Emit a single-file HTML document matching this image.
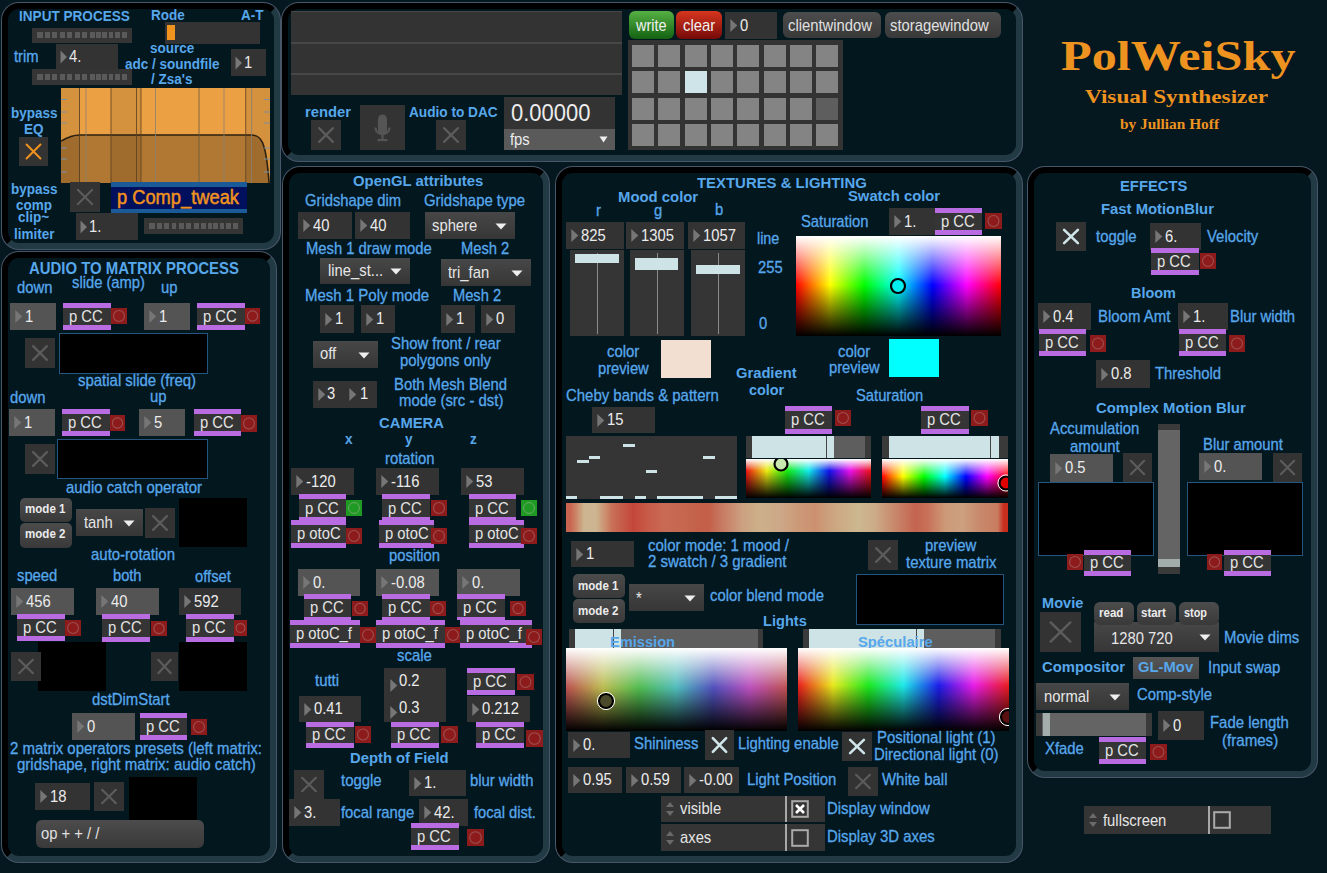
<!DOCTYPE html><html><head><meta charset="utf-8"><style>
*{margin:0;padding:0}
html,body{width:1327px;height:873px;overflow:hidden;background:#05171f}
body>div,body>svg{position:absolute}
.t{white-space:nowrap}
.r{-webkit-text-stroke:0.3px currentColor}
.pn{box-sizing:border-box;border:6px solid;border-color:#000 #223a43 #223a43 #000;border-radius:17px;background:#03171f;box-shadow:0 0 0 1px #48566a}
</style></head><body><div class="pn" style="left:2px;top:3px;width:278px;height:246px"></div>
<div class="pn" style="left:2px;top:252px;width:274px;height:610px"></div>
<div class="pn" style="left:282px;top:3px;width:740px;height:158px"></div>
<div class="pn" style="left:283px;top:167px;width:266px;height:695px"></div>
<div class="pn" style="left:556px;top:167px;width:466px;height:695px"></div>
<div class="pn" style="left:1028px;top:167px;width:289px;height:610px"></div>
<div class="t" style="left:1060.50px;top:55.68px;font:bold 43.0px 'Liberation Serif',serif;line-height:0;color:#ee9320;transform:scaleX(1.1684);transform-origin:0 0;">PolWeiSky</div>
<div class="t" style="left:1084.80px;top:97.43px;font:bold 19.5px 'Liberation Serif',serif;line-height:0;color:#ee9320;transform:scaleX(1.1910);transform-origin:0 0;">Visual Synthesizer</div>
<div class="t" style="left:1119.50px;top:123.80px;font:bold 15.0px 'Liberation Serif',serif;line-height:0;color:#ee9320;transform:scaleX(1.0239);transform-origin:0 0;">by Jullian Hoff</div>
<div class="t" style="left:19.30px;top:15.53px;font:bold 14.31px 'Liberation Sans',sans-serif;line-height:0;color:#57a7eb;transform:scaleX(0.9496);transform-origin:0 0;">INPUT PROCESS</div>
<div class="t" style="left:150.80px;top:15.23px;font:bold 14.31px 'Liberation Sans',sans-serif;line-height:0;color:#57a7eb;transform:scaleX(0.9434);transform-origin:0 0;">Rode</div>
<div class="t" style="left:241.01px;top:15.23px;font:bold 14.31px 'Liberation Sans',sans-serif;line-height:0;color:#57a7eb;transform:scaleX(0.9434);transform-origin:0 0;">A-T</div>
<div style="left:32px;top:28px;width:100px;height:15px;background:#353535;"></div>
<div style="left:37.0px;top:32px;width:6.2px;height:6px;background:#5a5a5a"></div>
<div style="left:44.9px;top:32px;width:5.0px;height:6px;background:#5a5a5a"></div>
<div style="left:52.1px;top:32px;width:4.9px;height:6px;background:#5a5a5a"></div>
<div style="left:59.8px;top:32px;width:5.0px;height:6px;background:#5a5a5a"></div>
<div style="left:67.3px;top:32px;width:4.9px;height:6px;background:#5a5a5a"></div>
<div style="left:74.7px;top:32px;width:5.1px;height:6px;background:#5a5a5a"></div>
<div style="left:82.2px;top:32px;width:5.0px;height:6px;background:#5a5a5a"></div>
<div style="left:89.9px;top:32px;width:4.8px;height:6px;background:#5a5a5a"></div>
<div style="left:96.1px;top:32px;width:4.8px;height:6px;background:#5a5a5a"></div>
<div style="left:102.1px;top:32px;width:4.7px;height:6px;background:#5a5a5a"></div>
<div style="left:108.5px;top:32px;width:4.7px;height:6px;background:#5a5a5a"></div>
<div style="left:115.0px;top:32px;width:4.6px;height:6px;background:#5a5a5a"></div>
<div style="left:122.0px;top:32px;width:5.0px;height:6px;background:#5a5a5a"></div>
<div style="left:56px;top:44px;width:62px;height:25px;background:#333333;"></div>
<svg style="left:60px;top:49.5px" width="8" height="14"><path d="M0.5 0.5 L7 7 L0.5 13.5Z" fill="#777"/></svg>
<div class="t" style="left:69.00px;top:57.24px;font:15.69px 'Liberation Sans',sans-serif;line-height:0;color:#e8e8e8;transform:scaleX(0.9434);transform-origin:0 0;">4.</div>
<div style="left:32px;top:69px;width:100px;height:16px;background:#353535;"></div>
<div style="left:37.0px;top:74px;width:6.2px;height:6px;background:#5a5a5a"></div>
<div style="left:44.9px;top:74px;width:5.0px;height:6px;background:#5a5a5a"></div>
<div style="left:52.1px;top:74px;width:4.9px;height:6px;background:#5a5a5a"></div>
<div style="left:59.8px;top:74px;width:5.0px;height:6px;background:#5a5a5a"></div>
<div style="left:67.3px;top:74px;width:4.9px;height:6px;background:#5a5a5a"></div>
<div style="left:74.7px;top:74px;width:5.1px;height:6px;background:#5a5a5a"></div>
<div style="left:82.2px;top:74px;width:5.0px;height:6px;background:#5a5a5a"></div>
<div style="left:89.9px;top:74px;width:4.8px;height:6px;background:#5a5a5a"></div>
<div style="left:96.1px;top:74px;width:4.8px;height:6px;background:#5a5a5a"></div>
<div style="left:102.1px;top:74px;width:4.7px;height:6px;background:#5a5a5a"></div>
<div style="left:108.5px;top:74px;width:4.7px;height:6px;background:#5a5a5a"></div>
<div style="left:115.0px;top:74px;width:4.6px;height:6px;background:#5a5a5a"></div>
<div style="left:122.0px;top:74px;width:5.0px;height:6px;background:#5a5a5a"></div>
<div class="t r" style="left:13.50px;top:56.86px;font:15.69px 'Liberation Sans',sans-serif;line-height:0;color:#57a7eb;transform:scaleX(0.9434);transform-origin:0 0;">trim</div>
<div style="left:165px;top:22px;width:95px;height:22px;background:#333;"></div>
<div style="left:167px;top:25px;width:8px;height:15px;background:#f0921e;"></div>
<div class="t" style="left:149.86px;top:48.03px;font:bold 14.31px 'Liberation Sans',sans-serif;line-height:0;color:#57a7eb;transform:scaleX(0.9434);transform-origin:0 0;">source</div>
<div class="t" style="left:125.14px;top:63.83px;font:bold 14.31px 'Liberation Sans',sans-serif;line-height:0;color:#57a7eb;transform:scaleX(0.9434);transform-origin:0 0;">adc / soundfile</div>
<div class="t" style="left:151.26px;top:78.83px;font:bold 14.31px 'Liberation Sans',sans-serif;line-height:0;color:#57a7eb;transform:scaleX(0.9434);transform-origin:0 0;">/ Zsa's</div>
<div style="left:231px;top:49px;width:35px;height:27px;background:#333333;"></div>
<svg style="left:235px;top:55.5px" width="8" height="14"><path d="M0.5 0.5 L7 7 L0.5 13.5Z" fill="#777"/></svg>
<div class="t" style="left:244.00px;top:63.24px;font:15.69px 'Liberation Sans',sans-serif;line-height:0;color:#e8e8e8;transform:scaleX(0.9434);transform-origin:0 0;">1</div>
<div class="t" style="left:10.74px;top:112.53px;font:bold 14.31px 'Liberation Sans',sans-serif;line-height:0;color:#57a7eb;transform:scaleX(0.9434);transform-origin:0 0;">bypass</div>
<div class="t" style="left:24.25px;top:129.03px;font:bold 14.31px 'Liberation Sans',sans-serif;line-height:0;color:#57a7eb;transform:scaleX(0.9434);transform-origin:0 0;">EQ</div>
<div style="left:19px;top:137px;width:29px;height:29px;background:#333;"></div>
<svg style="left:19px;top:137px" width="29" height="29"><path d="M7.54 7.54 L21.46 21.46 M21.46 7.54 L7.54 21.46" stroke="#f0921e" stroke-width="2" stroke-linecap="round"/></svg>
<svg style="left:61px;top:88px" width="209" height="95"><rect x="0" y="0" width="18.5" height="95" fill="#d4913e"/><rect x="18.5" y="0" width="31.5" height="95" fill="#eba044"/><rect x="50" y="0" width="30" height="95" fill="#d4913e"/><rect x="80" y="0" width="58" height="95" fill="#eba044"/><rect x="138" y="0" width="47" height="95" fill="#eba044"/><rect x="185" y="0" width="24" height="95" fill="#d4913e"/><path d="M0 53 C8 49 12 47 19 47 L190 47 C200 47 205 52 209 95 L209 95 L0 95Z" fill="#000" fill-opacity="0.25"/><path d="M0 53 C8 49 12 47 19 47 L190 47 C200 47 205 52 208 95" stroke="#2a2010" stroke-width="1.5" fill="none"/><rect x="18.0" y="0" width="1" height="95" fill="#5a4020" fill-opacity="0.8"/><rect x="24.5" y="0" width="1" height="95" fill="#8a8070" fill-opacity="0.8"/><rect x="49.5" y="0" width="1" height="95" fill="#5a4020" fill-opacity="0.8"/><rect x="75.0" y="0" width="1" height="95" fill="#5a4020" fill-opacity="0.8"/><rect x="79.5" y="0" width="1" height="95" fill="#5a4020" fill-opacity="0.8"/><rect x="94.0" y="0" width="1" height="95" fill="#8a8070" fill-opacity="0.8"/><rect x="137.5" y="0" width="1" height="95" fill="#6a5a40" fill-opacity="0.8"/><rect x="162.5" y="0" width="1" height="95" fill="#8a8070" fill-opacity="0.8"/><rect x="184.2" y="0" width="1" height="95" fill="#5a4020" fill-opacity="0.8"/><rect x="190.1" y="0" width="1" height="95" fill="#8a8070" fill-opacity="0.8"/><rect x="0" y="11.0" width="6" height="1" fill="#8090a0"/><rect x="203" y="11.0" width="6" height="1" fill="#8090a0"/><rect x="0" y="23.5" width="6" height="1" fill="#8090a0"/><rect x="203" y="23.5" width="6" height="1" fill="#8090a0"/><rect x="0" y="34.5" width="6" height="1" fill="#8090a0"/><rect x="203" y="34.5" width="6" height="1" fill="#8090a0"/><rect x="0" y="59.5" width="6" height="1" fill="#8090a0"/><rect x="203" y="59.5" width="6" height="1" fill="#8090a0"/><rect x="0" y="70.5" width="6" height="1" fill="#8090a0"/><rect x="203" y="70.5" width="6" height="1" fill="#8090a0"/><rect x="0" y="83.5" width="6" height="1" fill="#8090a0"/><rect x="203" y="83.5" width="6" height="1" fill="#8090a0"/></svg>
<div class="t" style="left:10.74px;top:189.13px;font:bold 14.31px 'Liberation Sans',sans-serif;line-height:0;color:#57a7eb;transform:scaleX(0.9434);transform-origin:0 0;">bypass</div>
<div class="t" style="left:16.00px;top:205.13px;font:bold 14.31px 'Liberation Sans',sans-serif;line-height:0;color:#57a7eb;transform:scaleX(0.9434);transform-origin:0 0;">comp</div>
<div class="t" style="left:18.43px;top:217.33px;font:bold 14.31px 'Liberation Sans',sans-serif;line-height:0;color:#57a7eb;transform:scaleX(0.9434);transform-origin:0 0;">clip~</div>
<div class="t" style="left:13.74px;top:234.13px;font:bold 14.31px 'Liberation Sans',sans-serif;line-height:0;color:#57a7eb;transform:scaleX(0.9434);transform-origin:0 0;">limiter</div>
<div style="left:70px;top:182px;width:30px;height:30px;background:#333;"></div>
<svg style="left:70px;top:182px" width="30" height="30"><path d="M7.800000000000001 7.800000000000001 L22.2 22.2 M22.2 7.800000000000001 L7.800000000000001 22.2" stroke="#5c5c5c" stroke-width="2" stroke-linecap="round"/></svg>
<div style="left:76px;top:213px;width:62px;height:27px;background:#333333;"></div>
<svg style="left:80px;top:219.5px" width="8" height="14"><path d="M0.5 0.5 L7 7 L0.5 13.5Z" fill="#777"/></svg>
<div class="t" style="left:89.00px;top:227.24px;font:15.69px 'Liberation Sans',sans-serif;line-height:0;color:#e8e8e8;transform:scaleX(0.9434);transform-origin:0 0;">1.</div>
<div style="left:111px;top:181.5px;width:136px;height:31px;background:#00105c;border-top:5px solid #1b5a98;border-bottom:4.5px solid #1b5a98;box-sizing:border-box"></div>
<div class="t" style="left:117.00px;top:196.57px;font:19.4px 'Liberation Sans',sans-serif;line-height:0;color:#f0921e;transform:scaleX(0.9429);transform-origin:0 0;-webkit-text-stroke:0.5px #f0921e">p Comp_tweak</div>
<div style="left:144px;top:218px;width:99px;height:16px;background:#353535;"></div>
<div style="left:148.9px;top:223px;width:6.1px;height:6px;background:#5a5a5a"></div>
<div style="left:156.8px;top:223px;width:4.9px;height:6px;background:#5a5a5a"></div>
<div style="left:163.9px;top:223px;width:4.9px;height:6px;background:#5a5a5a"></div>
<div style="left:171.5px;top:223px;width:4.9px;height:6px;background:#5a5a5a"></div>
<div style="left:178.9px;top:223px;width:4.9px;height:6px;background:#5a5a5a"></div>
<div style="left:186.3px;top:223px;width:5.0px;height:6px;background:#5a5a5a"></div>
<div style="left:193.7px;top:223px;width:5.0px;height:6px;background:#5a5a5a"></div>
<div style="left:201.3px;top:223px;width:4.8px;height:6px;background:#5a5a5a"></div>
<div style="left:207.5px;top:223px;width:4.8px;height:6px;background:#5a5a5a"></div>
<div style="left:213.4px;top:223px;width:4.7px;height:6px;background:#5a5a5a"></div>
<div style="left:219.7px;top:223px;width:4.7px;height:6px;background:#5a5a5a"></div>
<div style="left:226.2px;top:223px;width:4.6px;height:6px;background:#5a5a5a"></div>
<div style="left:233.1px;top:223px;width:5.0px;height:6px;background:#5a5a5a"></div>
<div class="t" style="left:29.00px;top:268.78px;font:bold 15.9px 'Liberation Sans',sans-serif;line-height:0;color:#57a7eb;transform:scaleX(0.9383);transform-origin:0 0;">AUDIO TO MATRIX PROCESS</div>
<div class="t r" style="left:17.40px;top:287.96px;font:15.69px 'Liberation Sans',sans-serif;line-height:0;color:#57a7eb;transform:scaleX(0.9434);transform-origin:0 0;">down</div>
<div class="t r" style="left:71.70px;top:282.76px;font:15.69px 'Liberation Sans',sans-serif;line-height:0;color:#57a7eb;transform:scaleX(0.9408);transform-origin:0 0;">slide (amp)</div>
<div class="t r" style="left:161.00px;top:287.86px;font:15.69px 'Liberation Sans',sans-serif;line-height:0;color:#57a7eb;transform:scaleX(0.9434);transform-origin:0 0;">up</div>
<div style="left:10px;top:303px;width:46px;height:27px;background:#545454;"></div>
<svg style="left:14.5px;top:310.0px" width="8" height="13"><path d="M0.3 0 L7.3 6.5 L0.3 13Z" fill="#767676"/></svg>
<div class="t" style="left:24.50px;top:316.66px;font:15.69px 'Liberation Sans',sans-serif;line-height:0;color:#ececec;transform:scaleX(0.9434);transform-origin:0 0;">1</div>
<div style="left:63px;top:303px;width:48px;height:27px;background:#353535;border-top:5px solid #b96ce2;border-bottom:5px solid #b96ce2;box-sizing:border-box"></div>
<div class="t" style="left:68.50px;top:316.76px;font:15.69px 'Liberation Sans',sans-serif;line-height:0;color:#e4e4e4;transform:scaleX(0.9434);transform-origin:0 0;">p CC</div>
<svg style="left:111px;top:308px" width="16" height="16"><rect width="16" height="16" fill="#8e1b1b"/><circle cx="8.0" cy="8.0" r="5.44" fill="none" stroke="#9c5050" stroke-width="1.1"/></svg>
<div style="left:144px;top:303px;width:46px;height:27px;background:#545454;"></div>
<svg style="left:148.5px;top:310.0px" width="8" height="13"><path d="M0.3 0 L7.3 6.5 L0.3 13Z" fill="#767676"/></svg>
<div class="t" style="left:158.50px;top:316.66px;font:15.69px 'Liberation Sans',sans-serif;line-height:0;color:#ececec;transform:scaleX(0.9434);transform-origin:0 0;">1</div>
<div style="left:197px;top:303px;width:48px;height:27px;background:#353535;border-top:5px solid #b96ce2;border-bottom:5px solid #b96ce2;box-sizing:border-box"></div>
<div class="t" style="left:202.50px;top:316.76px;font:15.69px 'Liberation Sans',sans-serif;line-height:0;color:#e4e4e4;transform:scaleX(0.9434);transform-origin:0 0;">p CC</div>
<svg style="left:245px;top:308px" width="15" height="16"><rect width="15" height="16" fill="#8e1b1b"/><circle cx="7.5" cy="8.0" r="5.1000000000000005" fill="none" stroke="#9c5050" stroke-width="1.1"/></svg>
<div style="left:25px;top:338px;width:30px;height:30px;background:#333;"></div>
<svg style="left:25px;top:338px" width="30" height="30"><path d="M8.100000000000001 8.100000000000001 L21.9 21.9 M21.9 8.100000000000001 L8.100000000000001 21.9" stroke="#5c5c5c" stroke-width="2.2" stroke-linecap="round"/></svg>
<div style="left:59px;top:333px;width:149px;height:41px;background:#000;border:1px solid #23557f;box-sizing:border-box"></div>
<div class="t r" style="left:78.10px;top:380.96px;font:15.69px 'Liberation Sans',sans-serif;line-height:0;color:#57a7eb;transform:scaleX(0.9530);transform-origin:0 0;">spatial slide (freq)</div>
<div class="t r" style="left:10.00px;top:398.06px;font:15.69px 'Liberation Sans',sans-serif;line-height:0;color:#57a7eb;transform:scaleX(0.9434);transform-origin:0 0;">down</div>
<div class="t r" style="left:149.50px;top:397.16px;font:15.69px 'Liberation Sans',sans-serif;line-height:0;color:#57a7eb;transform:scaleX(0.9434);transform-origin:0 0;">up</div>
<div style="left:9px;top:409px;width:46px;height:27px;background:#545454;"></div>
<svg style="left:13.5px;top:416.0px" width="8" height="13"><path d="M0.3 0 L7.3 6.5 L0.3 13Z" fill="#767676"/></svg>
<div class="t" style="left:23.50px;top:422.66px;font:15.69px 'Liberation Sans',sans-serif;line-height:0;color:#ececec;transform:scaleX(0.9434);transform-origin:0 0;">1</div>
<div style="left:62px;top:409px;width:48px;height:27px;background:#353535;border-top:5px solid #b96ce2;border-bottom:5px solid #b96ce2;box-sizing:border-box"></div>
<div class="t" style="left:67.50px;top:422.76px;font:15.69px 'Liberation Sans',sans-serif;line-height:0;color:#e4e4e4;transform:scaleX(0.9434);transform-origin:0 0;">p CC</div>
<svg style="left:110px;top:415px" width="15" height="16"><rect width="15" height="16" fill="#8e1b1b"/><circle cx="7.5" cy="8.0" r="5.1000000000000005" fill="none" stroke="#9c5050" stroke-width="1.1"/></svg>
<div style="left:139px;top:409px;width:46px;height:27px;background:#545454;"></div>
<svg style="left:143.5px;top:416.0px" width="8" height="13"><path d="M0.3 0 L7.3 6.5 L0.3 13Z" fill="#767676"/></svg>
<div class="t" style="left:153.50px;top:422.66px;font:15.69px 'Liberation Sans',sans-serif;line-height:0;color:#ececec;transform:scaleX(0.9434);transform-origin:0 0;">5</div>
<div style="left:194px;top:409px;width:47px;height:27px;background:#353535;border-top:5px solid #b96ce2;border-bottom:5px solid #b96ce2;box-sizing:border-box"></div>
<div class="t" style="left:199.50px;top:422.76px;font:15.69px 'Liberation Sans',sans-serif;line-height:0;color:#e4e4e4;transform:scaleX(0.9434);transform-origin:0 0;">p CC</div>
<svg style="left:241px;top:415px" width="16" height="17"><rect width="16" height="17" fill="#8e1b1b"/><circle cx="8.0" cy="8.5" r="5.44" fill="none" stroke="#9c5050" stroke-width="1.1"/></svg>
<div style="left:25px;top:444px;width:30px;height:30px;background:#333;"></div>
<svg style="left:25px;top:444px" width="30" height="30"><path d="M8.100000000000001 8.100000000000001 L21.9 21.9 M21.9 8.100000000000001 L8.100000000000001 21.9" stroke="#5c5c5c" stroke-width="2.2" stroke-linecap="round"/></svg>
<div style="left:57px;top:439px;width:151px;height:40px;background:#000;border:1px solid #23557f;box-sizing:border-box"></div>
<div class="t r" style="left:65.60px;top:487.56px;font:15.69px 'Liberation Sans',sans-serif;line-height:0;color:#57a7eb;transform:scaleX(0.9508);transform-origin:0 0;">audio catch operator</div>
<div style="left:20px;top:498px;width:52px;height:24px;background:linear-gradient(#4c4c4c,#393939);border-radius:5px"></div>
<div class="t" style="left:25.00px;top:509.27px;font:bold 12.19px 'Liberation Sans',sans-serif;line-height:0;color:#ececec;transform:scaleX(0.9490);transform-origin:0 0;">mode 1</div>
<div style="left:20px;top:523px;width:52px;height:25px;background:linear-gradient(#4c4c4c,#393939);border-radius:5px"></div>
<div class="t" style="left:25.00px;top:534.27px;font:bold 12.19px 'Liberation Sans',sans-serif;line-height:0;color:#ececec;transform:scaleX(0.9490);transform-origin:0 0;">mode 2</div>
<div style="left:76px;top:509px;width:67px;height:27px;background:linear-gradient(#474747,#363636);"></div>
<div class="t" style="left:84.00px;top:523.16px;font:15.69px 'Liberation Sans',sans-serif;line-height:0;color:#e6e6e6;transform:scaleX(0.9434);transform-origin:0 0;">tanh</div>
<svg style="left:123px;top:519.5px" width="12" height="7"><path d="M0.5 0.5 L11.5 0.5 L6 6.5Z" fill="#eee"/></svg>
<div style="left:145px;top:508px;width:30px;height:30px;background:#333;"></div>
<svg style="left:145px;top:508px" width="30" height="30"><path d="M8.100000000000001 8.100000000000001 L21.9 21.9 M21.9 8.100000000000001 L8.100000000000001 21.9" stroke="#5c5c5c" stroke-width="2.2" stroke-linecap="round"/></svg>
<div style="left:179px;top:498px;width:68px;height:49px;background:#000;"></div>
<div class="t r" style="left:90.70px;top:555.06px;font:15.69px 'Liberation Sans',sans-serif;line-height:0;color:#57a7eb;transform:scaleX(0.9536);transform-origin:0 0;">auto-rotation</div>
<div class="t r" style="left:17.40px;top:576.06px;font:15.69px 'Liberation Sans',sans-serif;line-height:0;color:#57a7eb;transform:scaleX(0.9428);transform-origin:0 0;">speed</div>
<div class="t r" style="left:112.50px;top:576.46px;font:15.69px 'Liberation Sans',sans-serif;line-height:0;color:#57a7eb;transform:scaleX(0.9334);transform-origin:0 0;">both</div>
<div class="t r" style="left:194.60px;top:576.56px;font:15.69px 'Liberation Sans',sans-serif;line-height:0;color:#57a7eb;transform:scaleX(0.9400);transform-origin:0 0;">offset</div>
<div style="left:11px;top:588px;width:63px;height:27px;background:#545454;"></div>
<svg style="left:15.5px;top:595.0px" width="8" height="13"><path d="M0.3 0 L7.3 6.5 L0.3 13Z" fill="#767676"/></svg>
<div class="t" style="left:25.50px;top:601.66px;font:15.69px 'Liberation Sans',sans-serif;line-height:0;color:#ececec;transform:scaleX(0.9434);transform-origin:0 0;">456</div>
<div style="left:17px;top:614px;width:48px;height:27px;background:#353535;border-top:5px solid #b96ce2;border-bottom:5px solid #b96ce2;box-sizing:border-box"></div>
<div class="t" style="left:22.50px;top:627.76px;font:15.69px 'Liberation Sans',sans-serif;line-height:0;color:#e4e4e4;transform:scaleX(0.9434);transform-origin:0 0;">p CC</div>
<svg style="left:65px;top:620px" width="16" height="16"><rect width="16" height="16" fill="#8e1b1b"/><circle cx="8.0" cy="8.0" r="5.44" fill="none" stroke="#9c5050" stroke-width="1.1"/></svg>
<div style="left:96px;top:588px;width:63px;height:27px;background:#545454;"></div>
<svg style="left:100.5px;top:595.0px" width="8" height="13"><path d="M0.3 0 L7.3 6.5 L0.3 13Z" fill="#767676"/></svg>
<div class="t" style="left:110.50px;top:601.66px;font:15.69px 'Liberation Sans',sans-serif;line-height:0;color:#ececec;transform:scaleX(0.9434);transform-origin:0 0;">40</div>
<div style="left:102px;top:614px;width:48px;height:28px;background:#353535;border-top:5px solid #b96ce2;border-bottom:5px solid #b96ce2;box-sizing:border-box"></div>
<div class="t" style="left:107.50px;top:628.26px;font:15.69px 'Liberation Sans',sans-serif;line-height:0;color:#e4e4e4;transform:scaleX(0.9434);transform-origin:0 0;">p CC</div>
<svg style="left:151px;top:621px" width="16" height="15"><rect width="16" height="15" fill="#8e1b1b"/><circle cx="8.0" cy="7.5" r="5.1000000000000005" fill="none" stroke="#9c5050" stroke-width="1.1"/></svg>
<div style="left:179px;top:588px;width:62px;height:27px;background:#333333;"></div>
<svg style="left:183.5px;top:595.0px" width="8" height="13"><path d="M0.3 0 L7.3 6.5 L0.3 13Z" fill="#767676"/></svg>
<div class="t" style="left:193.50px;top:601.66px;font:15.69px 'Liberation Sans',sans-serif;line-height:0;color:#ececec;transform:scaleX(0.9434);transform-origin:0 0;">592</div>
<div style="left:186px;top:614px;width:48px;height:28px;background:#353535;border-top:5px solid #b96ce2;border-bottom:5px solid #b96ce2;box-sizing:border-box"></div>
<div class="t" style="left:191.50px;top:628.26px;font:15.69px 'Liberation Sans',sans-serif;line-height:0;color:#e4e4e4;transform:scaleX(0.9434);transform-origin:0 0;">p CC</div>
<svg style="left:234px;top:620px" width="13" height="16"><rect width="13" height="16" fill="#8e1b1b"/><circle cx="6.5" cy="8.0" r="4.42" fill="none" stroke="#9c5050" stroke-width="1.1"/></svg>
<div style="left:38px;top:642px;width:68px;height:49px;background:#000;"></div>
<div style="left:11px;top:652px;width:30px;height:29px;background:#333;"></div>
<svg style="left:11px;top:652px" width="30" height="29"><path d="M8.100000000000001 7.83 L21.9 21.17 M21.9 7.83 L8.100000000000001 21.17" stroke="#5c5c5c" stroke-width="2.2" stroke-linecap="round"/></svg>
<div style="left:179px;top:642px;width:68px;height:49px;background:#000;"></div>
<div style="left:151px;top:652px;width:27px;height:29px;background:#333;"></div>
<svg style="left:151px;top:652px" width="27" height="29"><path d="M7.290000000000001 7.83 L19.71 21.17 M19.71 7.83 L7.290000000000001 21.17" stroke="#5c5c5c" stroke-width="2.2" stroke-linecap="round"/></svg>
<div class="t r" style="left:91.90px;top:700.16px;font:15.69px 'Liberation Sans',sans-serif;line-height:0;color:#57a7eb;transform:scaleX(0.9470);transform-origin:0 0;">dstDimStart</div>
<div style="left:72px;top:713px;width:63px;height:27px;background:#545454;"></div>
<svg style="left:76.5px;top:720.0px" width="8" height="13"><path d="M0.3 0 L7.3 6.5 L0.3 13Z" fill="#767676"/></svg>
<div class="t" style="left:86.50px;top:726.66px;font:15.69px 'Liberation Sans',sans-serif;line-height:0;color:#ececec;transform:scaleX(0.9434);transform-origin:0 0;">0</div>
<div style="left:140px;top:713px;width:47px;height:27px;background:#353535;border-top:5px solid #b96ce2;border-bottom:5px solid #b96ce2;box-sizing:border-box"></div>
<div class="t" style="left:145.50px;top:726.76px;font:15.69px 'Liberation Sans',sans-serif;line-height:0;color:#e4e4e4;transform:scaleX(0.9434);transform-origin:0 0;">p CC</div>
<svg style="left:191px;top:719px" width="16" height="16"><rect width="16" height="16" fill="#8e1b1b"/><circle cx="8.0" cy="8.0" r="5.44" fill="none" stroke="#9c5050" stroke-width="1.1"/></svg>
<div class="t r" style="left:9.70px;top:748.86px;font:15.69px 'Liberation Sans',sans-serif;line-height:0;color:#57a7eb;transform:scaleX(0.9539);transform-origin:0 0;">2 matrix operators presets (left matrix:</div>
<div class="t r" style="left:16.50px;top:765.36px;font:15.69px 'Liberation Sans',sans-serif;line-height:0;color:#57a7eb;transform:scaleX(0.9575);transform-origin:0 0;">gridshape, right matrix: audio catch)</div>
<div style="left:35px;top:783px;width:55px;height:27px;background:#333333;"></div>
<svg style="left:39.5px;top:790.0px" width="8" height="13"><path d="M0.3 0 L7.3 6.5 L0.3 13Z" fill="#767676"/></svg>
<div class="t" style="left:49.50px;top:796.66px;font:15.69px 'Liberation Sans',sans-serif;line-height:0;color:#ececec;transform:scaleX(0.9434);transform-origin:0 0;">18</div>
<div style="left:94px;top:782px;width:30px;height:29px;background:#333;"></div>
<svg style="left:94px;top:782px" width="30" height="29"><path d="M8.100000000000001 7.83 L21.9 21.17 M21.9 7.83 L8.100000000000001 21.17" stroke="#5c5c5c" stroke-width="2.2" stroke-linecap="round"/></svg>
<div style="left:129px;top:777px;width:68px;height:43px;background:#000;"></div>
<div style="left:36px;top:820px;width:168px;height:28px;background:linear-gradient(#4c4c4c,#393939);border-radius:6px"></div>
<div class="t" style="left:40.90px;top:833.56px;font:15.69px 'Liberation Sans',sans-serif;line-height:0;color:#e0e0e0;transform:scaleX(0.9434);transform-origin:0 0;">op + + / /</div>
<div style="left:291px;top:11px;width:331px;height:84px;background:#333;border-top:1px solid #474747;box-sizing:border-box"></div>
<div style="left:291px;top:42px;width:331px;height:2px;background:#474747;"></div>
<div style="left:291px;top:73px;width:331px;height:2px;background:#474747;"></div>
<div class="t" style="left:305.10px;top:111.70px;font:bold 14.42px 'Liberation Sans',sans-serif;line-height:0;color:#57a7eb;transform:scaleX(1.0252);transform-origin:0 0;">render</div>
<div style="left:311px;top:120px;width:30px;height:30px;background:#333;"></div>
<svg style="left:311px;top:120px" width="30" height="30"><path d="M8.100000000000001 8.100000000000001 L21.9 21.9 M21.9 8.100000000000001 L8.100000000000001 21.9" stroke="#5c5c5c" stroke-width="2.2" stroke-linecap="round"/></svg>
<div style="left:360px;top:105px;width:45px;height:45px;background:#333;"></div>
<svg style="left:360px;top:105px" width="45" height="45"><rect x="18" y="9.5" width="9" height="20" rx="4.5" fill="#555"/><path d="M15.5 22.5 C15.5 31 29.5 31 29.5 22.5" stroke="#555" stroke-width="2.2" fill="none"/><rect x="21.4" y="29" width="2.2" height="6" fill="#555"/><rect x="17.5" y="34" width="10" height="2.2" fill="#555"/></svg>
<div class="t" style="left:408.90px;top:111.50px;font:bold 14.42px 'Liberation Sans',sans-serif;line-height:0;color:#57a7eb;transform:scaleX(0.9468);transform-origin:0 0;">Audio to DAC</div>
<div style="left:436px;top:120px;width:30px;height:30px;background:#333;"></div>
<svg style="left:436px;top:120px" width="30" height="30"><path d="M8.100000000000001 8.100000000000001 L21.9 21.9 M21.9 8.100000000000001 L8.100000000000001 21.9" stroke="#5c5c5c" stroke-width="2.2" stroke-linecap="round"/></svg>
<div style="left:504px;top:97px;width:111px;height:32px;background:#333;"></div>
<div class="t" style="left:510.70px;top:112.71px;font:23.32px 'Liberation Sans',sans-serif;line-height:0;color:#ececec;transform:scaleX(0.9431);transform-origin:0 0;">0.00000</div>
<div style="left:504px;top:129px;width:111px;height:21px;background:#5a5a5a;"></div>
<div class="t" style="left:510.30px;top:139.76px;font:15.69px 'Liberation Sans',sans-serif;line-height:0;color:#ececec;transform:scaleX(0.9434);transform-origin:0 0;">fps</div>
<svg style="left:599px;top:136px" width="9" height="7"><path d="M0.5 0.5 L8.5 0.5 L4.5 6.5Z" fill="#eee"/></svg>
<div style="left:628px;top:40px;width:215px;height:110px;background:#333;"></div>
<div style="left:632px;top:45px;width:22px;height:22px;background:#848484;"></div>
<div style="left:658px;top:45px;width:22px;height:22px;background:#848484;"></div>
<div style="left:685px;top:45px;width:22px;height:22px;background:#848484;"></div>
<div style="left:711px;top:45px;width:22px;height:22px;background:#848484;"></div>
<div style="left:737px;top:45px;width:22px;height:22px;background:#848484;"></div>
<div style="left:764px;top:45px;width:22px;height:22px;background:#848484;"></div>
<div style="left:790px;top:45px;width:22px;height:22px;background:#848484;"></div>
<div style="left:816px;top:45px;width:22px;height:22px;background:#848484;"></div>
<div style="left:632px;top:71px;width:22px;height:22px;background:#848484;"></div>
<div style="left:658px;top:71px;width:22px;height:22px;background:#848484;"></div>
<div style="left:685px;top:71px;width:22px;height:22px;background:#cfe4e8;"></div>
<div style="left:711px;top:71px;width:22px;height:22px;background:#848484;"></div>
<div style="left:737px;top:71px;width:22px;height:22px;background:#848484;"></div>
<div style="left:764px;top:71px;width:22px;height:22px;background:#848484;"></div>
<div style="left:790px;top:71px;width:22px;height:22px;background:#848484;"></div>
<div style="left:816px;top:71px;width:22px;height:22px;background:#848484;"></div>
<div style="left:632px;top:98px;width:22px;height:22px;background:#848484;"></div>
<div style="left:658px;top:98px;width:22px;height:22px;background:#848484;"></div>
<div style="left:685px;top:98px;width:22px;height:22px;background:#848484;"></div>
<div style="left:711px;top:98px;width:22px;height:22px;background:#848484;"></div>
<div style="left:737px;top:98px;width:22px;height:22px;background:#848484;"></div>
<div style="left:764px;top:98px;width:22px;height:22px;background:#848484;"></div>
<div style="left:790px;top:98px;width:22px;height:22px;background:#848484;"></div>
<div style="left:816px;top:98px;width:22px;height:22px;background:#5e5e5e;"></div>
<div style="left:632px;top:124px;width:22px;height:22px;background:#848484;"></div>
<div style="left:658px;top:124px;width:22px;height:22px;background:#848484;"></div>
<div style="left:685px;top:124px;width:22px;height:22px;background:#848484;"></div>
<div style="left:711px;top:124px;width:22px;height:22px;background:#848484;"></div>
<div style="left:737px;top:124px;width:22px;height:22px;background:#848484;"></div>
<div style="left:764px;top:124px;width:22px;height:22px;background:#848484;"></div>
<div style="left:790px;top:124px;width:22px;height:22px;background:#848484;"></div>
<div style="left:816px;top:124px;width:22px;height:22px;background:#848484;"></div>
<div style="left:629px;top:11px;width:45px;height:28px;background:linear-gradient(#56b043,#136212);border-radius:6px"></div>
<div class="t" style="left:635.60px;top:25.56px;font:15.69px 'Liberation Sans',sans-serif;line-height:0;color:#f2f2f2;transform:scaleX(0.9208);transform-origin:0 0;">write</div>
<div style="left:676px;top:11px;width:46px;height:28px;background:linear-gradient(#d8361e,#740a0a);border-radius:6px"></div>
<div class="t" style="left:683.10px;top:25.56px;font:15.69px 'Liberation Sans',sans-serif;line-height:0;color:#f2f2f2;transform:scaleX(0.9469);transform-origin:0 0;">clear</div>
<div style="left:725px;top:12px;width:52px;height:27px;background:#333333;"></div>
<svg style="left:729.5px;top:19.0px" width="8" height="13"><path d="M0.3 0 L7.3 6.5 L0.3 13Z" fill="#767676"/></svg>
<div class="t" style="left:739.50px;top:25.66px;font:15.69px 'Liberation Sans',sans-serif;line-height:0;color:#ececec;transform:scaleX(0.9434);transform-origin:0 0;">0</div>
<div style="left:783px;top:12px;width:98px;height:26px;background:linear-gradient(#4c4c4c,#393939);border-radius:6px"></div>
<div class="t" style="left:787.80px;top:25.66px;font:15.69px 'Liberation Sans',sans-serif;line-height:0;color:#e0e0e0;transform:scaleX(0.9434);transform-origin:0 0;">clientwindow</div>
<div style="left:885px;top:12px;width:116px;height:26px;background:linear-gradient(#4c4c4c,#393939);border-radius:6px"></div>
<div class="t" style="left:890.00px;top:25.66px;font:15.69px 'Liberation Sans',sans-serif;line-height:0;color:#e0e0e0;transform:scaleX(0.9434);transform-origin:0 0;">storagewindow</div>
<div class="t" style="left:353.40px;top:181.10px;font:bold 14.42px 'Liberation Sans',sans-serif;line-height:0;color:#57a7eb;transform:scaleX(1.0317);transform-origin:0 0;">OpenGL attributes</div>
<div class="t r" style="left:304.80px;top:200.96px;font:15.69px 'Liberation Sans',sans-serif;line-height:0;color:#57a7eb;transform:scaleX(0.9410);transform-origin:0 0;">Gridshape dim</div>
<div class="t r" style="left:423.60px;top:200.96px;font:15.69px 'Liberation Sans',sans-serif;line-height:0;color:#57a7eb;transform:scaleX(0.9493);transform-origin:0 0;">Gridshape type</div>
<div style="left:298px;top:212px;width:54px;height:27px;background:#333333;"></div>
<svg style="left:302.5px;top:219.0px" width="8" height="13"><path d="M0.3 0 L7.3 6.5 L0.3 13Z" fill="#767676"/></svg>
<div class="t" style="left:312.50px;top:225.66px;font:15.69px 'Liberation Sans',sans-serif;line-height:0;color:#ececec;transform:scaleX(0.9434);transform-origin:0 0;">40</div>
<div style="left:355px;top:212px;width:55px;height:27px;background:#333333;"></div>
<svg style="left:359.5px;top:219.0px" width="8" height="13"><path d="M0.3 0 L7.3 6.5 L0.3 13Z" fill="#767676"/></svg>
<div class="t" style="left:369.50px;top:225.66px;font:15.69px 'Liberation Sans',sans-serif;line-height:0;color:#ececec;transform:scaleX(0.9434);transform-origin:0 0;">40</div>
<div style="left:425px;top:212px;width:90px;height:27px;background:linear-gradient(#474747,#363636);"></div>
<div class="t" style="left:432.20px;top:225.66px;font:15.69px 'Liberation Sans',sans-serif;line-height:0;color:#e6e6e6;transform:scaleX(0.9434);transform-origin:0 0;">sphere</div>
<svg style="left:495px;top:222.5px" width="12" height="7"><path d="M0.5 0.5 L11.5 0.5 L6 6.5Z" fill="#eee"/></svg>
<div class="t r" style="left:305.80px;top:248.56px;font:15.69px 'Liberation Sans',sans-serif;line-height:0;color:#57a7eb;transform:scaleX(0.9422);transform-origin:0 0;">Mesh 1 draw mode</div>
<div class="t r" style="left:461.20px;top:248.56px;font:15.69px 'Liberation Sans',sans-serif;line-height:0;color:#57a7eb;transform:scaleX(0.9388);transform-origin:0 0;">Mesh 2</div>
<div style="left:320px;top:258px;width:90px;height:26px;background:linear-gradient(#474747,#363636);"></div>
<div class="t" style="left:327.90px;top:271.46px;font:15.69px 'Liberation Sans',sans-serif;line-height:0;color:#e6e6e6;transform:scaleX(0.9434);transform-origin:0 0;">line_st...</div>
<svg style="left:390px;top:268.0px" width="12" height="7"><path d="M0.5 0.5 L11.5 0.5 L6 6.5Z" fill="#eee"/></svg>
<div style="left:441px;top:259px;width:90px;height:27px;background:linear-gradient(#474747,#363636);"></div>
<div class="t" style="left:448.40px;top:272.96px;font:15.69px 'Liberation Sans',sans-serif;line-height:0;color:#e6e6e6;transform:scaleX(0.9434);transform-origin:0 0;">tri_fan</div>
<svg style="left:511px;top:269.5px" width="12" height="7"><path d="M0.5 0.5 L11.5 0.5 L6 6.5Z" fill="#eee"/></svg>
<div class="t r" style="left:305.00px;top:296.36px;font:15.69px 'Liberation Sans',sans-serif;line-height:0;color:#57a7eb;transform:scaleX(0.9559);transform-origin:0 0;">Mesh 1 Poly mode</div>
<div class="t r" style="left:453.30px;top:296.36px;font:15.69px 'Liberation Sans',sans-serif;line-height:0;color:#57a7eb;transform:scaleX(0.9349);transform-origin:0 0;">Mesh 2</div>
<div style="left:320px;top:305px;width:34px;height:28px;background:#333333;"></div>
<svg style="left:324.5px;top:312.5px" width="8" height="13"><path d="M0.3 0 L7.3 6.5 L0.3 13Z" fill="#767676"/></svg>
<div class="t" style="left:334.50px;top:319.16px;font:15.69px 'Liberation Sans',sans-serif;line-height:0;color:#ececec;transform:scaleX(0.9434);transform-origin:0 0;">1</div>
<div style="left:361px;top:305px;width:34px;height:28px;background:#333333;"></div>
<svg style="left:365.5px;top:312.5px" width="8" height="13"><path d="M0.3 0 L7.3 6.5 L0.3 13Z" fill="#767676"/></svg>
<div class="t" style="left:375.50px;top:319.16px;font:15.69px 'Liberation Sans',sans-serif;line-height:0;color:#ececec;transform:scaleX(0.9434);transform-origin:0 0;">1</div>
<div style="left:441px;top:305px;width:34px;height:28px;background:#333333;"></div>
<svg style="left:445.5px;top:312.5px" width="8" height="13"><path d="M0.3 0 L7.3 6.5 L0.3 13Z" fill="#767676"/></svg>
<div class="t" style="left:455.50px;top:319.16px;font:15.69px 'Liberation Sans',sans-serif;line-height:0;color:#ececec;transform:scaleX(0.9434);transform-origin:0 0;">1</div>
<div style="left:481px;top:305px;width:34px;height:28px;background:#333333;"></div>
<svg style="left:485.5px;top:312.5px" width="8" height="13"><path d="M0.3 0 L7.3 6.5 L0.3 13Z" fill="#767676"/></svg>
<div class="t" style="left:495.50px;top:319.16px;font:15.69px 'Liberation Sans',sans-serif;line-height:0;color:#ececec;transform:scaleX(0.9434);transform-origin:0 0;">0</div>
<div style="left:313px;top:341px;width:65px;height:27px;background:linear-gradient(#474747,#363636);"></div>
<div class="t" style="left:319.90px;top:354.16px;font:15.69px 'Liberation Sans',sans-serif;line-height:0;color:#e6e6e6;transform:scaleX(0.9434);transform-origin:0 0;">off</div>
<svg style="left:358px;top:351.5px" width="12" height="7"><path d="M0.5 0.5 L11.5 0.5 L6 6.5Z" fill="#eee"/></svg>
<div class="t r" style="left:390.80px;top:343.76px;font:15.69px 'Liberation Sans',sans-serif;line-height:0;color:#57a7eb;transform:scaleX(0.9468);transform-origin:0 0;">Show front / rear</div>
<div class="t r" style="left:400.00px;top:360.56px;font:15.69px 'Liberation Sans',sans-serif;line-height:0;color:#57a7eb;transform:scaleX(0.9485);transform-origin:0 0;">polygons only</div>
<div style="left:313px;top:381px;width:64px;height:27px;background:#333;"></div>
<svg style="left:317.5px;top:387.5px" width="8" height="13"><path d="M0.3 0 L7.3 6.5 L0.3 13Z" fill="#767676"/></svg>
<svg style="left:349.2px;top:387.5px" width="8" height="13"><path d="M0.3 0 L7.3 6.5 L0.3 13Z" fill="#767676"/></svg>
<div class="t" style="left:327.00px;top:394.26px;font:15.69px 'Liberation Sans',sans-serif;line-height:0;color:#ececec;transform:scaleX(0.9434);transform-origin:0 0;">3</div>
<div class="t" style="left:359.60px;top:394.26px;font:15.69px 'Liberation Sans',sans-serif;line-height:0;color:#ececec;transform:scaleX(0.9434);transform-origin:0 0;">1</div>
<div class="t r" style="left:394.05px;top:385.36px;font:15.69px 'Liberation Sans',sans-serif;line-height:0;color:#57a7eb;transform:scaleX(0.9449);transform-origin:0 0;">Both Mesh Blend</div>
<div class="t r" style="left:398.60px;top:401.46px;font:15.69px 'Liberation Sans',sans-serif;line-height:0;color:#57a7eb;transform:scaleX(0.9505);transform-origin:0 0;">mode (src - dst)</div>
<div class="t" style="left:378.80px;top:422.90px;font:bold 14.42px 'Liberation Sans',sans-serif;line-height:0;color:#57a7eb;transform:scaleX(1.0274);transform-origin:0 0;">CAMERA</div>
<div class="t" style="left:345.10px;top:439.00px;font:bold 14.42px 'Liberation Sans',sans-serif;line-height:0;color:#57a7eb;transform:scaleX(0.9434);transform-origin:0 0;">x</div>
<div class="t" style="left:405.00px;top:439.00px;font:bold 14.42px 'Liberation Sans',sans-serif;line-height:0;color:#57a7eb;transform:scaleX(0.9434);transform-origin:0 0;">y</div>
<div class="t" style="left:470.30px;top:439.00px;font:bold 14.42px 'Liberation Sans',sans-serif;line-height:0;color:#57a7eb;transform:scaleX(0.9434);transform-origin:0 0;">z</div>
<div class="t r" style="left:384.80px;top:458.56px;font:15.69px 'Liberation Sans',sans-serif;line-height:0;color:#57a7eb;transform:scaleX(0.9440);transform-origin:0 0;">rotation</div>
<div style="left:291px;top:468px;width:63px;height:27px;background:#333333;"></div>
<svg style="left:295.5px;top:475.0px" width="8" height="13"><path d="M0.3 0 L7.3 6.5 L0.3 13Z" fill="#767676"/></svg>
<div class="t" style="left:305.50px;top:481.66px;font:15.69px 'Liberation Sans',sans-serif;line-height:0;color:#ececec;transform:scaleX(0.9434);transform-origin:0 0;">-120</div>
<div style="left:299px;top:494px;width:47px;height:5px;background:#b96ce2;"></div>
<div style="left:299px;top:499px;width:47px;height:19px;background:#353535;"></div>
<div class="t" style="left:304.50px;top:508.76px;font:15.69px 'Liberation Sans',sans-serif;line-height:0;color:#e4e4e4;transform:scaleX(0.9434);transform-origin:0 0;">p CC</div>
<div style="left:299px;top:517px;width:47px;height:3px;background:#b96ce2;"></div>
<div style="left:291px;top:520px;width:55px;height:5px;background:#b96ce2;"></div>
<div style="left:291px;top:525px;width:55px;height:18px;background:#353535;"></div>
<div class="t" style="left:296.50px;top:534.26px;font:15.69px 'Liberation Sans',sans-serif;line-height:0;color:#e4e4e4;transform:scaleX(0.9434);transform-origin:0 0;">p otoC</div>
<div style="left:291px;top:543px;width:55px;height:5px;background:#b96ce2;"></div>
<svg style="left:346px;top:500px" width="16" height="16"><rect width="16" height="16" fill="#1f9a22"/><circle cx="8.0" cy="8.0" r="5.44" fill="none" stroke="#6aa86a" stroke-width="1"/></svg>
<svg style="left:346px;top:528px" width="16" height="16"><rect width="16" height="16" fill="#8e1b1b"/><circle cx="8.0" cy="8.0" r="5.44" fill="none" stroke="#9c5050" stroke-width="1.1"/></svg>
<div style="left:376px;top:468px;width:63px;height:27px;background:#333333;"></div>
<svg style="left:380.5px;top:475.0px" width="8" height="13"><path d="M0.3 0 L7.3 6.5 L0.3 13Z" fill="#767676"/></svg>
<div class="t" style="left:390.50px;top:481.66px;font:15.69px 'Liberation Sans',sans-serif;line-height:0;color:#ececec;transform:scaleX(0.9434);transform-origin:0 0;">-116</div>
<div style="left:382px;top:494px;width:48px;height:5px;background:#b96ce2;"></div>
<div style="left:382px;top:499px;width:48px;height:19px;background:#353535;"></div>
<div class="t" style="left:387.50px;top:508.76px;font:15.69px 'Liberation Sans',sans-serif;line-height:0;color:#e4e4e4;transform:scaleX(0.9434);transform-origin:0 0;">p CC</div>
<div style="left:382px;top:517px;width:48px;height:3px;background:#b96ce2;"></div>
<div style="left:379px;top:520px;width:55px;height:5px;background:#b96ce2;"></div>
<div style="left:379px;top:525px;width:55px;height:18px;background:#353535;"></div>
<div class="t" style="left:384.50px;top:534.26px;font:15.69px 'Liberation Sans',sans-serif;line-height:0;color:#e4e4e4;transform:scaleX(0.9434);transform-origin:0 0;">p otoC</div>
<div style="left:379px;top:543px;width:55px;height:5px;background:#b96ce2;"></div>
<svg style="left:431px;top:500px" width="16" height="16"><rect width="16" height="16" fill="#8e1b1b"/><circle cx="8.0" cy="8.0" r="5.44" fill="none" stroke="#9c5050" stroke-width="1.1"/></svg>
<svg style="left:431px;top:528px" width="16" height="16"><rect width="16" height="16" fill="#8e1b1b"/><circle cx="8.0" cy="8.0" r="5.44" fill="none" stroke="#9c5050" stroke-width="1.1"/></svg>
<div style="left:461px;top:468px;width:63px;height:27px;background:#333333;"></div>
<svg style="left:465.5px;top:475.0px" width="8" height="13"><path d="M0.3 0 L7.3 6.5 L0.3 13Z" fill="#767676"/></svg>
<div class="t" style="left:475.50px;top:481.66px;font:15.69px 'Liberation Sans',sans-serif;line-height:0;color:#ececec;transform:scaleX(0.9434);transform-origin:0 0;">53</div>
<div style="left:469px;top:494px;width:47px;height:5px;background:#b96ce2;"></div>
<div style="left:469px;top:499px;width:47px;height:19px;background:#353535;"></div>
<div class="t" style="left:474.50px;top:508.76px;font:15.69px 'Liberation Sans',sans-serif;line-height:0;color:#e4e4e4;transform:scaleX(0.9434);transform-origin:0 0;">p CC</div>
<div style="left:469px;top:517px;width:47px;height:3px;background:#b96ce2;"></div>
<div style="left:469px;top:520px;width:55px;height:5px;background:#b96ce2;"></div>
<div style="left:469px;top:525px;width:55px;height:18px;background:#353535;"></div>
<div class="t" style="left:474.50px;top:534.26px;font:15.69px 'Liberation Sans',sans-serif;line-height:0;color:#e4e4e4;transform:scaleX(0.9434);transform-origin:0 0;">p otoC</div>
<div style="left:469px;top:543px;width:55px;height:5px;background:#b96ce2;"></div>
<svg style="left:521px;top:500px" width="16" height="16"><rect width="16" height="16" fill="#1f9a22"/><circle cx="8.0" cy="8.0" r="5.44" fill="none" stroke="#6aa86a" stroke-width="1"/></svg>
<svg style="left:521px;top:528px" width="16" height="16"><rect width="16" height="16" fill="#8e1b1b"/><circle cx="8.0" cy="8.0" r="5.44" fill="none" stroke="#9c5050" stroke-width="1.1"/></svg>
<div class="t r" style="left:389.30px;top:556.46px;font:15.69px 'Liberation Sans',sans-serif;line-height:0;color:#57a7eb;transform:scaleX(0.9431);transform-origin:0 0;">position</div>
<div style="left:298px;top:569px;width:62px;height:27px;background:#545454;"></div>
<svg style="left:302.5px;top:576.0px" width="8" height="13"><path d="M0.3 0 L7.3 6.5 L0.3 13Z" fill="#767676"/></svg>
<div class="t" style="left:312.50px;top:582.66px;font:15.69px 'Liberation Sans',sans-serif;line-height:0;color:#ececec;transform:scaleX(0.9434);transform-origin:0 0;">0.</div>
<div style="left:304px;top:594px;width:47px;height:5px;background:#b96ce2;"></div>
<div style="left:304px;top:599px;width:47px;height:18px;background:#353535;"></div>
<div class="t" style="left:309.50px;top:608.36px;font:15.69px 'Liberation Sans',sans-serif;line-height:0;color:#e4e4e4;transform:scaleX(0.9434);transform-origin:0 0;">p CC</div>
<div style="left:304px;top:617px;width:47px;height:3px;background:#b96ce2;"></div>
<div style="left:290px;top:620px;width:70px;height:5px;background:#b96ce2;"></div>
<div style="left:290px;top:625px;width:70px;height:18px;background:#353535;"></div>
<div class="t" style="left:295.50px;top:634.26px;font:15.69px 'Liberation Sans',sans-serif;line-height:0;color:#e4e4e4;transform:scaleX(0.9434);transform-origin:0 0;">p otoC_f</div>
<div style="left:290px;top:643px;width:70px;height:5px;background:#b96ce2;"></div>
<svg style="left:352px;top:601px" width="16" height="15"><rect width="16" height="15" fill="#8e1b1b"/><circle cx="8.0" cy="7.5" r="5.1000000000000005" fill="none" stroke="#9c5050" stroke-width="1.1"/></svg>
<svg style="left:360px;top:627px" width="16" height="16"><rect width="16" height="16" fill="#8e1b1b"/><circle cx="8.0" cy="8.0" r="5.44" fill="none" stroke="#9c5050" stroke-width="1.1"/></svg>
<div style="left:376px;top:569px;width:63px;height:27px;background:#545454;"></div>
<svg style="left:380.5px;top:576.0px" width="8" height="13"><path d="M0.3 0 L7.3 6.5 L0.3 13Z" fill="#767676"/></svg>
<div class="t" style="left:390.50px;top:582.66px;font:15.69px 'Liberation Sans',sans-serif;line-height:0;color:#ececec;transform:scaleX(0.9434);transform-origin:0 0;">-0.08</div>
<div style="left:382px;top:594px;width:48px;height:5px;background:#b96ce2;"></div>
<div style="left:382px;top:599px;width:48px;height:18px;background:#353535;"></div>
<div class="t" style="left:387.50px;top:608.36px;font:15.69px 'Liberation Sans',sans-serif;line-height:0;color:#e4e4e4;transform:scaleX(0.9434);transform-origin:0 0;">p CC</div>
<div style="left:382px;top:617px;width:48px;height:3px;background:#b96ce2;"></div>
<div style="left:376px;top:620px;width:69px;height:5px;background:#b96ce2;"></div>
<div style="left:376px;top:625px;width:69px;height:18px;background:#353535;"></div>
<div class="t" style="left:381.50px;top:634.26px;font:15.69px 'Liberation Sans',sans-serif;line-height:0;color:#e4e4e4;transform:scaleX(0.9434);transform-origin:0 0;">p otoC_f</div>
<div style="left:376px;top:643px;width:69px;height:5px;background:#b96ce2;"></div>
<svg style="left:430px;top:601px" width="16" height="15"><rect width="16" height="15" fill="#8e1b1b"/><circle cx="8.0" cy="7.5" r="5.1000000000000005" fill="none" stroke="#9c5050" stroke-width="1.1"/></svg>
<svg style="left:445px;top:627px" width="16" height="16"><rect width="16" height="16" fill="#8e1b1b"/><circle cx="8.0" cy="8.0" r="5.44" fill="none" stroke="#9c5050" stroke-width="1.1"/></svg>
<div style="left:457px;top:569px;width:63px;height:27px;background:#545454;"></div>
<svg style="left:461.5px;top:576.0px" width="8" height="13"><path d="M0.3 0 L7.3 6.5 L0.3 13Z" fill="#767676"/></svg>
<div class="t" style="left:471.50px;top:582.66px;font:15.69px 'Liberation Sans',sans-serif;line-height:0;color:#ececec;transform:scaleX(0.9434);transform-origin:0 0;">0.</div>
<div style="left:457px;top:594px;width:48px;height:5px;background:#b96ce2;"></div>
<div style="left:457px;top:599px;width:48px;height:18px;background:#353535;"></div>
<div class="t" style="left:462.50px;top:608.36px;font:15.69px 'Liberation Sans',sans-serif;line-height:0;color:#e4e4e4;transform:scaleX(0.9434);transform-origin:0 0;">p CC</div>
<div style="left:457px;top:617px;width:48px;height:3px;background:#b96ce2;"></div>
<div style="left:460px;top:620px;width:72px;height:5px;background:#b96ce2;"></div>
<div style="left:460px;top:625px;width:72px;height:18px;background:#353535;"></div>
<div class="t" style="left:465.50px;top:634.26px;font:15.69px 'Liberation Sans',sans-serif;line-height:0;color:#e4e4e4;transform:scaleX(0.9434);transform-origin:0 0;">p otoC_f</div>
<div style="left:460px;top:643px;width:72px;height:5px;background:#b96ce2;"></div>
<svg style="left:510px;top:601px" width="16" height="15"><rect width="16" height="15" fill="#8e1b1b"/><circle cx="8.0" cy="7.5" r="5.1000000000000005" fill="none" stroke="#9c5050" stroke-width="1.1"/></svg>
<svg style="left:526px;top:629px" width="16" height="16"><rect width="16" height="16" fill="#8e1b1b"/><circle cx="8.0" cy="8.0" r="5.44" fill="none" stroke="#9c5050" stroke-width="1.1"/></svg>
<div class="t r" style="left:397.00px;top:655.86px;font:15.69px 'Liberation Sans',sans-serif;line-height:0;color:#57a7eb;transform:scaleX(0.9502);transform-origin:0 0;">scale</div>
<div class="t r" style="left:315.10px;top:681.26px;font:15.69px 'Liberation Sans',sans-serif;line-height:0;color:#57a7eb;transform:scaleX(0.9531);transform-origin:0 0;">tutti</div>
<div style="left:299px;top:696px;width:62px;height:26px;background:#333333;"></div>
<svg style="left:303.5px;top:702.5px" width="8" height="13"><path d="M0.3 0 L7.3 6.5 L0.3 13Z" fill="#767676"/></svg>
<div class="t" style="left:313.50px;top:709.16px;font:15.69px 'Liberation Sans',sans-serif;line-height:0;color:#ececec;transform:scaleX(0.9434);transform-origin:0 0;">0.41</div>
<div style="left:306px;top:722px;width:48px;height:26px;background:#353535;border-top:5px solid #b96ce2;border-bottom:5px solid #b96ce2;box-sizing:border-box"></div>
<div class="t" style="left:311.50px;top:735.26px;font:15.69px 'Liberation Sans',sans-serif;line-height:0;color:#e4e4e4;transform:scaleX(0.9434);transform-origin:0 0;">p CC</div>
<svg style="left:355px;top:726px" width="16" height="17"><rect width="16" height="17" fill="#8e1b1b"/><circle cx="8.0" cy="8.5" r="5.44" fill="none" stroke="#9c5050" stroke-width="1.1"/></svg>
<div style="left:384px;top:668px;width:62px;height:54px;background:#333;"></div>
<svg style="left:389.5px;top:679.2px" width="8" height="13"><path d="M0.3 0 L7.3 6.5 L0.3 13Z" fill="#767676"/></svg>
<svg style="left:389.5px;top:706.4px" width="8" height="13"><path d="M0.3 0 L7.3 6.5 L0.3 13Z" fill="#767676"/></svg>
<div class="t" style="left:398.50px;top:681.26px;font:15.69px 'Liberation Sans',sans-serif;line-height:0;color:#ececec;transform:scaleX(0.9434);transform-origin:0 0;">0.2</div>
<div class="t" style="left:398.50px;top:708.46px;font:15.69px 'Liberation Sans',sans-serif;line-height:0;color:#ececec;transform:scaleX(0.9434);transform-origin:0 0;">0.3</div>
<div style="left:391px;top:722px;width:48px;height:26px;background:#353535;border-top:5px solid #b96ce2;border-bottom:5px solid #b96ce2;box-sizing:border-box"></div>
<div class="t" style="left:396.50px;top:735.26px;font:15.69px 'Liberation Sans',sans-serif;line-height:0;color:#e4e4e4;transform:scaleX(0.9434);transform-origin:0 0;">p CC</div>
<svg style="left:441px;top:726px" width="17" height="17"><rect width="17" height="17" fill="#8e1b1b"/><circle cx="8.5" cy="8.5" r="5.78" fill="none" stroke="#9c5050" stroke-width="1.1"/></svg>
<div style="left:467px;top:668px;width:48px;height:27px;background:#353535;border-top:5px solid #b96ce2;border-bottom:5px solid #b96ce2;box-sizing:border-box"></div>
<div class="t" style="left:472.50px;top:681.76px;font:15.69px 'Liberation Sans',sans-serif;line-height:0;color:#e4e4e4;transform:scaleX(0.9434);transform-origin:0 0;">p CC</div>
<svg style="left:517px;top:674px" width="17" height="16"><rect width="17" height="16" fill="#8e1b1b"/><circle cx="8.5" cy="8.0" r="5.44" fill="none" stroke="#9c5050" stroke-width="1.1"/></svg>
<div style="left:467px;top:696px;width:63px;height:26px;background:#333333;"></div>
<svg style="left:471.5px;top:702.5px" width="8" height="13"><path d="M0.3 0 L7.3 6.5 L0.3 13Z" fill="#767676"/></svg>
<div class="t" style="left:481.50px;top:709.16px;font:15.69px 'Liberation Sans',sans-serif;line-height:0;color:#ececec;transform:scaleX(0.9434);transform-origin:0 0;">0.212</div>
<div style="left:476px;top:722px;width:48px;height:26px;background:#353535;border-top:5px solid #b96ce2;border-bottom:5px solid #b96ce2;box-sizing:border-box"></div>
<div class="t" style="left:481.50px;top:735.26px;font:15.69px 'Liberation Sans',sans-serif;line-height:0;color:#e4e4e4;transform:scaleX(0.9434);transform-origin:0 0;">p CC</div>
<svg style="left:526px;top:730px" width="17" height="17"><rect width="17" height="17" fill="#8e1b1b"/><circle cx="8.5" cy="8.5" r="5.78" fill="none" stroke="#9c5050" stroke-width="1.1"/></svg>
<div class="t" style="left:349.50px;top:757.90px;font:bold 14.42px 'Liberation Sans',sans-serif;line-height:0;color:#57a7eb;transform:scaleX(1.0271);transform-origin:0 0;">Depth of Field</div>
<div style="left:294px;top:770px;width:30px;height:29px;background:#333;"></div>
<svg style="left:294px;top:770px" width="30" height="29"><path d="M8.100000000000001 7.83 L21.9 21.17 M21.9 7.83 L8.100000000000001 21.17" stroke="#5c5c5c" stroke-width="2.2" stroke-linecap="round"/></svg>
<div class="t r" style="left:341.40px;top:780.66px;font:15.69px 'Liberation Sans',sans-serif;line-height:0;color:#57a7eb;transform:scaleX(0.9498);transform-origin:0 0;">toggle</div>
<div style="left:409px;top:770px;width:57px;height:26px;background:#333333;"></div>
<svg style="left:413.5px;top:776.5px" width="8" height="13"><path d="M0.3 0 L7.3 6.5 L0.3 13Z" fill="#767676"/></svg>
<div class="t" style="left:423.50px;top:783.16px;font:15.69px 'Liberation Sans',sans-serif;line-height:0;color:#ececec;transform:scaleX(0.9434);transform-origin:0 0;">1.</div>
<div class="t r" style="left:469.70px;top:781.46px;font:15.69px 'Liberation Sans',sans-serif;line-height:0;color:#57a7eb;transform:scaleX(0.9457);transform-origin:0 0;">blur width</div>
<div style="left:289px;top:799px;width:51px;height:27px;background:#333333;"></div>
<svg style="left:293.5px;top:806.0px" width="8" height="13"><path d="M0.3 0 L7.3 6.5 L0.3 13Z" fill="#767676"/></svg>
<div class="t" style="left:303.50px;top:812.66px;font:15.69px 'Liberation Sans',sans-serif;line-height:0;color:#ececec;transform:scaleX(0.9434);transform-origin:0 0;">3.</div>
<div class="t r" style="left:340.50px;top:813.06px;font:15.69px 'Liberation Sans',sans-serif;line-height:0;color:#57a7eb;transform:scaleX(0.9443);transform-origin:0 0;">focal range</div>
<div style="left:419px;top:799px;width:49px;height:27px;background:#333333;"></div>
<svg style="left:423.5px;top:806.0px" width="8" height="13"><path d="M0.3 0 L7.3 6.5 L0.3 13Z" fill="#767676"/></svg>
<div class="t" style="left:433.50px;top:812.66px;font:15.69px 'Liberation Sans',sans-serif;line-height:0;color:#ececec;transform:scaleX(0.9434);transform-origin:0 0;">42.</div>
<div class="t r" style="left:473.70px;top:813.06px;font:15.69px 'Liberation Sans',sans-serif;line-height:0;color:#57a7eb;transform:scaleX(0.9341);transform-origin:0 0;">focal dist.</div>
<div style="left:411px;top:823px;width:48px;height:27px;background:#353535;border-top:5px solid #b96ce2;border-bottom:5px solid #b96ce2;box-sizing:border-box"></div>
<div class="t" style="left:416.50px;top:836.76px;font:15.69px 'Liberation Sans',sans-serif;line-height:0;color:#e4e4e4;transform:scaleX(0.9434);transform-origin:0 0;">p CC</div>
<svg style="left:467px;top:829px" width="17" height="17"><rect width="17" height="17" fill="#8e1b1b"/><circle cx="8.5" cy="8.5" r="5.78" fill="none" stroke="#9c5050" stroke-width="1.1"/></svg>
<div class="t" style="left:696.60px;top:182.90px;font:bold 14.42px 'Liberation Sans',sans-serif;line-height:0;color:#57a7eb;transform:scaleX(1.0354);transform-origin:0 0;">TEXTURES &amp; LIGHTING</div>
<div class="t" style="left:617.50px;top:196.70px;font:bold 14.42px 'Liberation Sans',sans-serif;line-height:0;color:#57a7eb;transform:scaleX(1.0325);transform-origin:0 0;">Mood color</div>
<div class="t" style="left:847.90px;top:196.20px;font:bold 14.42px 'Liberation Sans',sans-serif;line-height:0;color:#57a7eb;transform:scaleX(1.0276);transform-origin:0 0;">Swatch color</div>
<div class="t r" style="left:595.70px;top:210.66px;font:15.69px 'Liberation Sans',sans-serif;line-height:0;color:#57a7eb;transform:scaleX(0.9434);transform-origin:0 0;">r</div>
<div class="t r" style="left:653.90px;top:210.66px;font:15.69px 'Liberation Sans',sans-serif;line-height:0;color:#57a7eb;transform:scaleX(0.9434);transform-origin:0 0;">g</div>
<div class="t r" style="left:715.00px;top:210.26px;font:15.69px 'Liberation Sans',sans-serif;line-height:0;color:#57a7eb;transform:scaleX(0.9434);transform-origin:0 0;">b</div>
<div style="left:566px;top:222px;width:58px;height:27px;background:#333333;"></div>
<svg style="left:570.5px;top:229.0px" width="8" height="13"><path d="M0.3 0 L7.3 6.5 L0.3 13Z" fill="#767676"/></svg>
<div class="t" style="left:580.50px;top:235.66px;font:15.69px 'Liberation Sans',sans-serif;line-height:0;color:#ececec;transform:scaleX(0.9434);transform-origin:0 0;">825</div>
<div style="left:626px;top:222px;width:58px;height:27px;background:#333333;"></div>
<svg style="left:630.5px;top:229.0px" width="8" height="13"><path d="M0.3 0 L7.3 6.5 L0.3 13Z" fill="#767676"/></svg>
<div class="t" style="left:640.50px;top:235.66px;font:15.69px 'Liberation Sans',sans-serif;line-height:0;color:#ececec;transform:scaleX(0.9434);transform-origin:0 0;">1305</div>
<div style="left:688px;top:222px;width:57px;height:27px;background:#333333;"></div>
<svg style="left:692.5px;top:229.0px" width="8" height="13"><path d="M0.3 0 L7.3 6.5 L0.3 13Z" fill="#767676"/></svg>
<div class="t" style="left:702.50px;top:235.66px;font:15.69px 'Liberation Sans',sans-serif;line-height:0;color:#ececec;transform:scaleX(0.9434);transform-origin:0 0;">1057</div>
<div class="t r" style="left:757.20px;top:239.26px;font:15.69px 'Liberation Sans',sans-serif;line-height:0;color:#57a7eb;transform:scaleX(0.9131);transform-origin:0 0;">line</div>
<div class="t r" style="left:801.30px;top:221.56px;font:15.69px 'Liberation Sans',sans-serif;line-height:0;color:#57a7eb;transform:scaleX(0.9424);transform-origin:0 0;">Saturation</div>
<div style="left:889px;top:208px;width:47px;height:27px;background:#333;"></div>
<svg style="left:893.5px;top:215.0px" width="8" height="13"><path d="M0.3 0 L7.3 6.5 L0.3 13Z" fill="#767676"/></svg>
<div class="t" style="left:903.50px;top:221.56px;font:15.69px 'Liberation Sans',sans-serif;line-height:0;color:#ececec;transform:scaleX(0.9434);transform-origin:0 0;">1.</div>
<div style="left:935px;top:208px;width:47px;height:27px;background:#353535;border-top:5px solid #b96ce2;border-bottom:5px solid #b96ce2;box-sizing:border-box"></div>
<div class="t" style="left:940.50px;top:221.76px;font:15.69px 'Liberation Sans',sans-serif;line-height:0;color:#e4e4e4;transform:scaleX(0.9434);transform-origin:0 0;">p CC</div>
<svg style="left:985px;top:213px" width="17" height="16"><rect width="17" height="16" fill="#8e1b1b"/><circle cx="8.5" cy="8.0" r="5.44" fill="none" stroke="#9c5050" stroke-width="1.1"/></svg>
<div style="left:570px;top:250px;width:54px;height:86px;background:#353535;"></div>
<div style="left:596.5px;top:253px;width:1.2px;height:81px;background:#8a8a8a;"></div>
<div style="left:575px;top:254px;width:44px;height:9px;background:#cde3e6;"></div>
<div style="left:630px;top:250px;width:54px;height:86px;background:#353535;"></div>
<div style="left:656.5px;top:253px;width:1.2px;height:81px;background:#8a8a8a;"></div>
<div style="left:635px;top:258px;width:43px;height:12px;background:#cde3e6;"></div>
<div style="left:691px;top:250px;width:54px;height:86px;background:#353535;"></div>
<div style="left:717.5px;top:253px;width:1.2px;height:81px;background:#8a8a8a;"></div>
<div style="left:696px;top:265px;width:44px;height:9px;background:#cde3e6;"></div>
<div class="t r" style="left:757.50px;top:268.06px;font:15.69px 'Liberation Sans',sans-serif;line-height:0;color:#57a7eb;transform:scaleX(0.9398);transform-origin:0 0;">255</div>
<div class="t r" style="left:759.30px;top:324.06px;font:15.69px 'Liberation Sans',sans-serif;line-height:0;color:#57a7eb;transform:scaleX(0.9434);transform-origin:0 0;">0</div>
<div style="left:796px;top:236px;width:205px;height:100px;overflow:hidden;background:linear-gradient(#fff 0%,rgba(255,255,255,0) 49%),linear-gradient(rgba(0,0,0,0) 49%,#000 100%),linear-gradient(90deg,#ff0000,#ffff00,#00ff00,#00ffff,#0000ff,#ff00ff,#ff0000)"><svg style="position:absolute;left:91.6px;top:39.5px" width="20" height="20"><circle cx="10" cy="10" r="7" fill="#00f0f0" stroke="#000" stroke-width="2.2"/></svg></div>
<div class="t r" style="left:607.40px;top:351.76px;font:15.69px 'Liberation Sans',sans-serif;line-height:0;color:#57a7eb;transform:scaleX(0.9469);transform-origin:0 0;">color</div>
<div class="t r" style="left:598.25px;top:368.56px;font:15.69px 'Liberation Sans',sans-serif;line-height:0;color:#57a7eb;transform:scaleX(0.9378);transform-origin:0 0;">preview</div>
<div style="left:661px;top:340px;width:50px;height:38px;background:#f2dfd2;"></div>
<div class="t r" style="left:837.65px;top:351.56px;font:15.69px 'Liberation Sans',sans-serif;line-height:0;color:#57a7eb;transform:scaleX(0.9440);transform-origin:0 0;">color</div>
<div class="t r" style="left:828.55px;top:368.06px;font:15.69px 'Liberation Sans',sans-serif;line-height:0;color:#57a7eb;transform:scaleX(0.9378);transform-origin:0 0;">preview</div>
<div style="left:889px;top:339px;width:50px;height:38px;background:#00ffff;"></div>
<div class="t" style="left:736.30px;top:372.70px;font:bold 14.42px 'Liberation Sans',sans-serif;line-height:0;color:#57a7eb;transform:scaleX(1.0223);transform-origin:0 0;">Gradient</div>
<div class="t" style="left:749.00px;top:389.50px;font:bold 14.42px 'Liberation Sans',sans-serif;line-height:0;color:#57a7eb;">color</div>
<div class="t r" style="left:566.30px;top:396.06px;font:15.69px 'Liberation Sans',sans-serif;line-height:0;color:#57a7eb;transform:scaleX(0.9522);transform-origin:0 0;">Cheby bands &amp; pattern</div>
<div class="t r" style="left:855.70px;top:396.26px;font:15.69px 'Liberation Sans',sans-serif;line-height:0;color:#57a7eb;transform:scaleX(0.9410);transform-origin:0 0;">Saturation</div>
<div style="left:592px;top:407px;width:63px;height:26px;background:#333333;"></div>
<svg style="left:596.5px;top:413.5px" width="8" height="13"><path d="M0.3 0 L7.3 6.5 L0.3 13Z" fill="#767676"/></svg>
<div class="t" style="left:606.50px;top:420.16px;font:15.69px 'Liberation Sans',sans-serif;line-height:0;color:#ececec;transform:scaleX(0.9434);transform-origin:0 0;">15</div>
<div style="left:785px;top:406px;width:47px;height:28px;background:#353535;border-top:5px solid #b96ce2;border-bottom:5px solid #b96ce2;box-sizing:border-box"></div>
<div class="t" style="left:790.50px;top:420.26px;font:15.69px 'Liberation Sans',sans-serif;line-height:0;color:#e4e4e4;transform:scaleX(0.9434);transform-origin:0 0;">p CC</div>
<svg style="left:835px;top:410px" width="16" height="16"><rect width="16" height="16" fill="#8e1b1b"/><circle cx="8.0" cy="8.0" r="5.44" fill="none" stroke="#9c5050" stroke-width="1.1"/></svg>
<div style="left:921px;top:406px;width:48px;height:28px;background:#353535;border-top:5px solid #b96ce2;border-bottom:5px solid #b96ce2;box-sizing:border-box"></div>
<div class="t" style="left:926.50px;top:420.26px;font:15.69px 'Liberation Sans',sans-serif;line-height:0;color:#e4e4e4;transform:scaleX(0.9434);transform-origin:0 0;">p CC</div>
<svg style="left:971px;top:410px" width="17" height="16"><rect width="17" height="16" fill="#8e1b1b"/><circle cx="8.5" cy="8.0" r="5.44" fill="none" stroke="#9c5050" stroke-width="1.1"/></svg>
<div style="left:566px;top:436px;width:171px;height:63px;background:#353535;"></div>
<div style="left:566px;top:496px;width:11px;height:2.5px;background:#cde3e6;"></div>
<div style="left:577px;top:460px;width:12px;height:2.5px;background:#cde3e6;"></div>
<div style="left:589px;top:456px;width:11px;height:2.5px;background:#cde3e6;"></div>
<div style="left:600px;top:496px;width:12px;height:2.5px;background:#cde3e6;"></div>
<div style="left:612px;top:496px;width:11px;height:2.5px;background:#cde3e6;"></div>
<div style="left:623px;top:444px;width:12px;height:2.5px;background:#cde3e6;"></div>
<div style="left:635px;top:496px;width:11px;height:2.5px;background:#cde3e6;"></div>
<div style="left:646px;top:470px;width:11px;height:2.5px;background:#cde3e6;"></div>
<div style="left:657px;top:496px;width:12px;height:2.5px;background:#cde3e6;"></div>
<div style="left:669px;top:496px;width:11px;height:2.5px;background:#cde3e6;"></div>
<div style="left:680px;top:496px;width:12px;height:2.5px;background:#cde3e6;"></div>
<div style="left:692px;top:496px;width:11px;height:2.5px;background:#cde3e6;"></div>
<div style="left:703px;top:456px;width:12px;height:2.5px;background:#cde3e6;"></div>
<div style="left:715px;top:496px;width:11px;height:2.5px;background:#cde3e6;"></div>
<div style="left:726px;top:496px;width:11px;height:2.5px;background:#cde3e6;"></div>
<div style="left:746px;top:436px;width:125px;height:22px;background:#3a3a3a;"></div>
<div style="left:752px;top:436px;width:82px;height:22px;background:#cde3e6;"></div>
<div style="left:834px;top:436px;width:31px;height:22px;background:#5e5e5e;"></div>
<div style="left:826px;top:436px;width:1px;height:22px;background:#444;"></div>
<div style="left:882px;top:436px;width:126px;height:22px;background:#3a3a3a;"></div>
<div style="left:889px;top:436px;width:110px;height:22px;background:#cde3e6;"></div>
<div style="left:999px;top:436px;width:0px;height:22px;background:#5e5e5e;"></div>
<div style="left:990px;top:436px;width:1px;height:22px;background:#444;"></div>
<div style="left:746px;top:459px;width:125px;height:39px;overflow:hidden;background:linear-gradient(#fff 0%,rgba(255,255,255,0) 30%),linear-gradient(rgba(0,0,0,0) 30%,#000 100%),linear-gradient(90deg,#ec1313,#ecec13,#13ec13,#13ecec,#1313ec,#ec13ec,#ec1313)"><svg style="position:absolute;left:25.4px;top:-4.7px" width="20" height="20"><circle cx="10" cy="10" r="6.5" fill="#c8e8b0" stroke="#000" stroke-width="2.2"/></svg></div>
<div style="left:882px;top:459px;width:126px;height:39px;overflow:hidden;background:linear-gradient(#fff 0%,rgba(255,255,255,0) 45%),linear-gradient(rgba(0,0,0,0) 45%,#000 100%),linear-gradient(90deg,#ff0000,#ffff00,#00ff00,#00ffff,#0000ff,#ff00ff,#ff0000)"><svg style="position:absolute;left:114.4px;top:13.9px" width="20" height="20"><circle cx="10" cy="10" r="6.5" fill="#e00000" stroke="#000" stroke-width="2.2"/><circle cx="10" cy="10" r="8.1" fill="none" stroke="#fff" stroke-width="1"/></svg></div>
<div style="left:566px;top:503px;width:441.5px;height:29px;background:linear-gradient(90deg,#c86450 0.00%,#c86450 0.91%,#cc8a6c 2.49%,#ccb590 4.08%,#ccb590 6.80%,#cc9070 8.83%,#c87058 10.42%,#c4463a 15.18%,#c85a48 18.35%,#c86a55 22.20%,#c66850 26.05%,#c46048 30.12%,#c4604a 32.39%,#c88068 36.01%,#cca080 39.86%,#ccb08a 43.71%,#cca888 48.47%,#cc9a78 52.32%,#cc9070 56.40%,#cca580 60.25%,#ccb890 66.14%,#ccaa88 69.99%,#c88a6c 74.07%,#c46450 79.05%,#c87058 81.77%,#cc9a78 85.84%,#cca080 89.69%,#c88a6c 93.54%,#c87c60 97.62%,#c83020 98.98%,#c82a1a 100.00%);"></div>
<div style="left:571px;top:541px;width:63px;height:26px;background:#333333;"></div>
<svg style="left:575.5px;top:547.5px" width="8" height="13"><path d="M0.3 0 L7.3 6.5 L0.3 13Z" fill="#767676"/></svg>
<div class="t" style="left:585.50px;top:554.16px;font:15.69px 'Liberation Sans',sans-serif;line-height:0;color:#ececec;transform:scaleX(0.9434);transform-origin:0 0;">1</div>
<div class="t r" style="left:647.70px;top:545.56px;font:15.69px 'Liberation Sans',sans-serif;line-height:0;color:#57a7eb;transform:scaleX(0.9568);transform-origin:0 0;">color mode: 1 mood /</div>
<div class="t r" style="left:647.70px;top:562.46px;font:15.69px 'Liberation Sans',sans-serif;line-height:0;color:#57a7eb;transform:scaleX(0.9567);transform-origin:0 0;">2 swatch / 3 gradient</div>
<div style="left:868px;top:540px;width:30px;height:30px;background:#333;"></div>
<svg style="left:868px;top:540px" width="30" height="30"><path d="M8.100000000000001 8.100000000000001 L21.9 21.9 M21.9 8.100000000000001 L8.100000000000001 21.9" stroke="#5c5c5c" stroke-width="2.2" stroke-linecap="round"/></svg>
<div class="t r" style="left:925.00px;top:545.86px;font:15.69px 'Liberation Sans',sans-serif;line-height:0;color:#57a7eb;transform:scaleX(0.9471);transform-origin:0 0;">preview</div>
<div class="t r" style="left:905.60px;top:563.16px;font:15.69px 'Liberation Sans',sans-serif;line-height:0;color:#57a7eb;transform:scaleX(0.9534);transform-origin:0 0;">texture matrix</div>
<div style="left:573px;top:574px;width:52px;height:24px;background:linear-gradient(#4c4c4c,#393939);border-radius:5px"></div>
<div class="t" style="left:577.80px;top:585.87px;font:bold 12.19px 'Liberation Sans',sans-serif;line-height:0;color:#ececec;transform:scaleX(0.9490);transform-origin:0 0;">mode 1</div>
<div style="left:573px;top:599px;width:52px;height:24px;background:linear-gradient(#4c4c4c,#393939);border-radius:5px"></div>
<div class="t" style="left:577.80px;top:610.77px;font:bold 12.19px 'Liberation Sans',sans-serif;line-height:0;color:#ececec;transform:scaleX(0.9490);transform-origin:0 0;">mode 2</div>
<div style="left:629px;top:584px;width:75px;height:27px;background:linear-gradient(#474747,#363636);"></div>
<div class="t" style="left:636.00px;top:598.56px;font:15.69px 'Liberation Sans',sans-serif;line-height:0;color:#e6e6e6;transform:scaleX(0.9434);transform-origin:0 0;">*</div>
<svg style="left:684px;top:594.5px" width="12" height="7"><path d="M0.5 0.5 L11.5 0.5 L6 6.5Z" fill="#eee"/></svg>
<div class="t r" style="left:710.40px;top:596.36px;font:15.69px 'Liberation Sans',sans-serif;line-height:0;color:#57a7eb;transform:scaleX(0.9464);transform-origin:0 0;">color blend mode</div>
<div style="left:856px;top:574px;width:148px;height:51px;background:#000;border:1px solid #23557f;box-sizing:border-box"></div>
<div class="t" style="left:763.20px;top:620.90px;font:bold 14.42px 'Liberation Sans',sans-serif;line-height:0;color:#57a7eb;transform:scaleX(1.0129);transform-origin:0 0;">Lights</div>
<div style="left:569px;top:629px;width:194px;height:20px;background:#3a3a3a;"></div>
<div style="left:575px;top:629px;width:46px;height:20px;background:#cde3e6;"></div>
<div style="left:621px;top:629px;width:137px;height:20px;background:#5e5e5e;"></div>
<div style="left:613px;top:629px;width:1px;height:20px;background:#444;"></div>
<div class="t" style="left:609.70px;top:641.50px;font:bold 14.42px 'Liberation Sans',sans-serif;line-height:0;color:#57a7eb;transform:scaleX(1.0157);transform-origin:0 0;">Emission</div>
<div style="left:803px;top:629px;width:198px;height:20px;background:#3a3a3a;"></div>
<div style="left:809px;top:629px;width:115px;height:20px;background:#cde3e6;"></div>
<div style="left:924px;top:629px;width:71px;height:20px;background:#5e5e5e;"></div>
<div style="left:916px;top:629px;width:1px;height:20px;background:#444;"></div>
<div class="t" style="left:858.10px;top:641.50px;font:bold 14.42px 'Liberation Sans',sans-serif;line-height:0;color:#57a7eb;transform:scaleX(1.0244);transform-origin:0 0;">Sp&#233;culaire</div>
<div style="left:566px;top:648px;width:221px;height:83px;overflow:hidden;background:linear-gradient(#fff 0%,rgba(255,255,255,0) 48%),linear-gradient(rgba(0,0,0,0) 48%,#000 100%),linear-gradient(90deg,#bb5050,#bbbb50,#50bb50,#50bbbb,#5050bb,#bb50bb,#bb5050)"><svg style="position:absolute;left:30.1px;top:43.4px" width="20" height="20"><circle cx="10" cy="10" r="7" fill="#4a4a2a" stroke="#000" stroke-width="2.2"/><circle cx="10" cy="10" r="8.6" fill="none" stroke="#fff" stroke-width="1"/></svg></div>
<div style="left:798px;top:648px;width:211px;height:83px;overflow:hidden;background:linear-gradient(#fff 0%,rgba(255,255,255,0) 45%),linear-gradient(rgba(0,0,0,0) 45%,#000 100%),linear-gradient(90deg,#e91d1d,#e9e91d,#1de91d,#1de9e9,#1d1de9,#e91de9,#e91d1d)"><svg style="position:absolute;left:200.2px;top:58.7px" width="20" height="20"><circle cx="10" cy="10" r="7" fill="#5a1010" stroke="#000" stroke-width="2.2"/><circle cx="10" cy="10" r="8.6" fill="none" stroke="#fff" stroke-width="1"/></svg></div>
<div style="left:568px;top:732px;width:62px;height:26px;background:#333333;"></div>
<svg style="left:572.5px;top:738.5px" width="8" height="13"><path d="M0.3 0 L7.3 6.5 L0.3 13Z" fill="#767676"/></svg>
<div class="t" style="left:582.50px;top:745.16px;font:15.69px 'Liberation Sans',sans-serif;line-height:0;color:#ececec;transform:scaleX(0.9434);transform-origin:0 0;">0.</div>
<div class="t r" style="left:633.80px;top:744.06px;font:15.69px 'Liberation Sans',sans-serif;line-height:0;color:#57a7eb;transform:scaleX(0.9482);transform-origin:0 0;">Shininess</div>
<div style="left:705px;top:730px;width:29px;height:30px;background:#333;"></div>
<svg style="left:705px;top:730px" width="29" height="30"><path d="M7.83 8.100000000000001 L21.17 21.9 M21.17 8.100000000000001 L7.83 21.9" stroke="#cfe5ea" stroke-width="2.6" stroke-linecap="round"/></svg>
<div class="t r" style="left:738.10px;top:744.06px;font:15.69px 'Liberation Sans',sans-serif;line-height:0;color:#57a7eb;transform:scaleX(0.9462);transform-origin:0 0;">Lighting enable</div>
<div style="left:842px;top:732px;width:30px;height:29px;background:#333;"></div>
<svg style="left:842px;top:732px" width="30" height="29"><path d="M8.100000000000001 7.83 L21.9 21.17 M21.9 7.83 L8.100000000000001 21.17" stroke="#cfe5ea" stroke-width="2.6" stroke-linecap="round"/></svg>
<div class="t r" style="left:876.90px;top:738.06px;font:15.69px 'Liberation Sans',sans-serif;line-height:0;color:#57a7eb;transform:scaleX(0.9511);transform-origin:0 0;">Positional light (1)</div>
<div class="t r" style="left:874.20px;top:755.06px;font:15.69px 'Liberation Sans',sans-serif;line-height:0;color:#57a7eb;transform:scaleX(0.9527);transform-origin:0 0;">Directional light (0)</div>
<div style="left:568px;top:767px;width:54px;height:26px;background:#333333;"></div>
<svg style="left:572.5px;top:773.5px" width="8" height="13"><path d="M0.3 0 L7.3 6.5 L0.3 13Z" fill="#767676"/></svg>
<div class="t" style="left:582.50px;top:780.16px;font:15.69px 'Liberation Sans',sans-serif;line-height:0;color:#ececec;transform:scaleX(0.9434);transform-origin:0 0;">0.95</div>
<div style="left:626px;top:767px;width:55px;height:26px;background:#333333;"></div>
<svg style="left:630.5px;top:773.5px" width="8" height="13"><path d="M0.3 0 L7.3 6.5 L0.3 13Z" fill="#767676"/></svg>
<div class="t" style="left:640.50px;top:780.16px;font:15.69px 'Liberation Sans',sans-serif;line-height:0;color:#ececec;transform:scaleX(0.9434);transform-origin:0 0;">0.59</div>
<div style="left:684px;top:767px;width:55px;height:26px;background:#333333;"></div>
<svg style="left:688.5px;top:773.5px" width="8" height="13"><path d="M0.3 0 L7.3 6.5 L0.3 13Z" fill="#767676"/></svg>
<div class="t" style="left:698.50px;top:780.16px;font:15.69px 'Liberation Sans',sans-serif;line-height:0;color:#ececec;transform:scaleX(0.9434);transform-origin:0 0;">-0.00</div>
<div class="t r" style="left:747.20px;top:779.96px;font:15.69px 'Liberation Sans',sans-serif;line-height:0;color:#57a7eb;transform:scaleX(0.9491);transform-origin:0 0;">Light Position</div>
<div style="left:848px;top:767px;width:30px;height:29px;background:#333;"></div>
<svg style="left:848px;top:767px" width="30" height="29"><path d="M8.100000000000001 7.83 L21.9 21.17 M21.9 7.83 L8.100000000000001 21.17" stroke="#5c5c5c" stroke-width="2.2" stroke-linecap="round"/></svg>
<div class="t r" style="left:881.90px;top:779.56px;font:15.69px 'Liberation Sans',sans-serif;line-height:0;color:#57a7eb;transform:scaleX(0.9509);transform-origin:0 0;">White ball</div>
<div style="left:661px;top:796px;width:164px;height:26px;background:#353535;"></div>
<svg style="left:665px;top:800.0px" width="10" height="18"><path d="M1 7 L5 2 L9 7Z M1 11 L5 16 L9 11Z" fill="#6a6a6a"/></svg>
<div class="t" style="left:680.00px;top:808.76px;font:15.69px 'Liberation Sans',sans-serif;line-height:0;color:#e6e6e6;transform:scaleX(0.9434);transform-origin:0 0;">visible</div>
<div style="left:785px;top:796px;width:2px;height:26px;background:#a8a8a8;"></div>
<svg style="left:791px;top:800.0px" width="18" height="18"><rect x="1.2" y="1.2" width="15.6" height="15.6" fill="none" stroke="#aaa" stroke-width="2"/><path d="M5 5 L13 13 M13 5 L5 13" stroke="#fff" stroke-width="2.6"/></svg>
<div style="left:661px;top:824px;width:164px;height:27px;background:#353535;"></div>
<svg style="left:665px;top:828.5px" width="10" height="18"><path d="M1 7 L5 2 L9 7Z M1 11 L5 16 L9 11Z" fill="#6a6a6a"/></svg>
<div class="t" style="left:680.00px;top:837.76px;font:15.69px 'Liberation Sans',sans-serif;line-height:0;color:#e6e6e6;transform:scaleX(0.9434);transform-origin:0 0;">axes</div>
<div style="left:785px;top:824px;width:2px;height:27px;background:#a8a8a8;"></div>
<svg style="left:791px;top:828.5px" width="18" height="18"><rect x="1.2" y="1.2" width="15.6" height="15.6" fill="none" stroke="#aaa" stroke-width="2"/></svg>
<div class="t r" style="left:827.20px;top:809.06px;font:15.69px 'Liberation Sans',sans-serif;line-height:0;color:#57a7eb;transform:scaleX(0.9508);transform-origin:0 0;">Display window</div>
<div class="t r" style="left:827.20px;top:837.46px;font:15.69px 'Liberation Sans',sans-serif;line-height:0;color:#57a7eb;transform:scaleX(0.9510);transform-origin:0 0;">Display 3D axes</div>
<div class="t" style="left:1120.10px;top:185.70px;font:bold 14.42px 'Liberation Sans',sans-serif;line-height:0;color:#57a7eb;transform:scaleX(1.0262);transform-origin:0 0;">EFFECTS</div>
<div class="t" style="left:1101.30px;top:209.00px;font:bold 14.42px 'Liberation Sans',sans-serif;line-height:0;color:#57a7eb;transform:scaleX(1.0300);transform-origin:0 0;">Fast MotionBlur</div>
<div style="left:1056px;top:222px;width:30px;height:29px;background:#333;"></div>
<svg style="left:1056px;top:222px" width="30" height="29"><path d="M8.100000000000001 7.83 L21.9 21.17 M21.9 7.83 L8.100000000000001 21.17" stroke="#cfe5ea" stroke-width="2.6" stroke-linecap="round"/></svg>
<div class="t r" style="left:1095.70px;top:237.06px;font:15.69px 'Liberation Sans',sans-serif;line-height:0;color:#57a7eb;transform:scaleX(0.9475);transform-origin:0 0;">toggle</div>
<div style="left:1150px;top:223px;width:51px;height:27px;background:#333333;"></div>
<svg style="left:1154.5px;top:230.0px" width="8" height="13"><path d="M0.3 0 L7.3 6.5 L0.3 13Z" fill="#767676"/></svg>
<div class="t" style="left:1164.50px;top:236.66px;font:15.69px 'Liberation Sans',sans-serif;line-height:0;color:#ececec;transform:scaleX(0.9434);transform-origin:0 0;">6.</div>
<div style="left:1151px;top:248px;width:48px;height:27px;background:#353535;border-top:5px solid #b96ce2;border-bottom:5px solid #b96ce2;box-sizing:border-box"></div>
<div class="t" style="left:1156.50px;top:261.76px;font:15.69px 'Liberation Sans',sans-serif;line-height:0;color:#e4e4e4;transform:scaleX(0.9434);transform-origin:0 0;">p CC</div>
<svg style="left:1200px;top:253px" width="16" height="16"><rect width="16" height="16" fill="#8e1b1b"/><circle cx="8.0" cy="8.0" r="5.44" fill="none" stroke="#9c5050" stroke-width="1.1"/></svg>
<div class="t r" style="left:1206.70px;top:236.86px;font:15.69px 'Liberation Sans',sans-serif;line-height:0;color:#57a7eb;transform:scaleX(0.9488);transform-origin:0 0;">Velocity</div>
<div class="t" style="left:1131.10px;top:292.90px;font:bold 14.42px 'Liberation Sans',sans-serif;line-height:0;color:#57a7eb;">Bloom</div>
<div style="left:1038px;top:303px;width:53px;height:27px;background:#333333;"></div>
<svg style="left:1042.5px;top:310.0px" width="8" height="13"><path d="M0.3 0 L7.3 6.5 L0.3 13Z" fill="#767676"/></svg>
<div class="t" style="left:1052.50px;top:316.66px;font:15.69px 'Liberation Sans',sans-serif;line-height:0;color:#ececec;transform:scaleX(0.9434);transform-origin:0 0;">0.4</div>
<div style="left:1039px;top:329px;width:47px;height:27px;background:#353535;border-top:5px solid #b96ce2;border-bottom:5px solid #b96ce2;box-sizing:border-box"></div>
<div class="t" style="left:1044.50px;top:342.76px;font:15.69px 'Liberation Sans',sans-serif;line-height:0;color:#e4e4e4;transform:scaleX(0.9434);transform-origin:0 0;">p CC</div>
<svg style="left:1090px;top:335px" width="16" height="17"><rect width="16" height="17" fill="#8e1b1b"/><circle cx="8.0" cy="8.5" r="5.44" fill="none" stroke="#9c5050" stroke-width="1.1"/></svg>
<div class="t r" style="left:1097.70px;top:316.86px;font:15.69px 'Liberation Sans',sans-serif;line-height:0;color:#57a7eb;transform:scaleX(0.9531);transform-origin:0 0;">Bloom Amt</div>
<div style="left:1178px;top:303px;width:50px;height:27px;background:#333333;"></div>
<svg style="left:1182.5px;top:310.0px" width="8" height="13"><path d="M0.3 0 L7.3 6.5 L0.3 13Z" fill="#767676"/></svg>
<div class="t" style="left:1192.50px;top:316.66px;font:15.69px 'Liberation Sans',sans-serif;line-height:0;color:#ececec;transform:scaleX(0.9434);transform-origin:0 0;">1.</div>
<div style="left:1179px;top:329px;width:47px;height:27px;background:#353535;border-top:5px solid #b96ce2;border-bottom:5px solid #b96ce2;box-sizing:border-box"></div>
<div class="t" style="left:1184.50px;top:342.76px;font:15.69px 'Liberation Sans',sans-serif;line-height:0;color:#e4e4e4;transform:scaleX(0.9434);transform-origin:0 0;">p CC</div>
<svg style="left:1229px;top:335px" width="16" height="17"><rect width="16" height="17" fill="#8e1b1b"/><circle cx="8.0" cy="8.5" r="5.44" fill="none" stroke="#9c5050" stroke-width="1.1"/></svg>
<div class="t r" style="left:1229.80px;top:316.86px;font:15.69px 'Liberation Sans',sans-serif;line-height:0;color:#57a7eb;transform:scaleX(0.9451);transform-origin:0 0;">Blur width</div>
<div style="left:1096px;top:360px;width:54px;height:28px;background:#333333;"></div>
<svg style="left:1100.5px;top:367.5px" width="8" height="13"><path d="M0.3 0 L7.3 6.5 L0.3 13Z" fill="#767676"/></svg>
<div class="t" style="left:1110.50px;top:374.16px;font:15.69px 'Liberation Sans',sans-serif;line-height:0;color:#ececec;transform:scaleX(0.9434);transform-origin:0 0;">0.8</div>
<div class="t r" style="left:1154.50px;top:373.86px;font:15.69px 'Liberation Sans',sans-serif;line-height:0;color:#57a7eb;transform:scaleX(0.9475);transform-origin:0 0;">Threshold</div>
<div class="t" style="left:1096.40px;top:407.70px;font:bold 14.42px 'Liberation Sans',sans-serif;line-height:0;color:#57a7eb;transform:scaleX(1.0334);transform-origin:0 0;">Complex Motion Blur</div>
<div class="t r" style="left:1050.05px;top:429.36px;font:15.69px 'Liberation Sans',sans-serif;line-height:0;color:#57a7eb;transform:scaleX(0.9482);transform-origin:0 0;">Accumulation</div>
<div class="t r" style="left:1069.65px;top:446.76px;font:15.69px 'Liberation Sans',sans-serif;line-height:0;color:#57a7eb;transform:scaleX(0.9498);transform-origin:0 0;">amount</div>
<div class="t r" style="left:1203.30px;top:444.96px;font:15.69px 'Liberation Sans',sans-serif;line-height:0;color:#57a7eb;transform:scaleX(0.9446);transform-origin:0 0;">Blur amount</div>
<div style="left:1050px;top:454px;width:63px;height:28px;background:#545454;"></div>
<svg style="left:1054.5px;top:461.5px" width="8" height="13"><path d="M0.3 0 L7.3 6.5 L0.3 13Z" fill="#767676"/></svg>
<div class="t" style="left:1064.50px;top:468.16px;font:15.69px 'Liberation Sans',sans-serif;line-height:0;color:#ececec;transform:scaleX(0.9434);transform-origin:0 0;">0.5</div>
<div style="left:1123px;top:453px;width:29px;height:29px;background:#333;"></div>
<svg style="left:1123px;top:453px" width="29" height="29"><path d="M7.83 7.83 L21.17 21.17 M21.17 7.83 L7.83 21.17" stroke="#5c5c5c" stroke-width="2.2" stroke-linecap="round"/></svg>
<div style="left:1038px;top:482px;width:116px;height:74px;background:#000;border:1px solid #23557f;box-sizing:border-box"></div>
<svg style="left:1067px;top:554px" width="16" height="16"><rect width="16" height="16" fill="#8e1b1b"/><circle cx="8.0" cy="8.0" r="5.44" fill="none" stroke="#9c5050" stroke-width="1.1"/></svg>
<div style="left:1084px;top:550px;width:47px;height:26px;background:#353535;border-top:5px solid #b96ce2;border-bottom:5px solid #b96ce2;box-sizing:border-box"></div>
<div class="t" style="left:1089.50px;top:563.26px;font:15.69px 'Liberation Sans',sans-serif;line-height:0;color:#e4e4e4;transform:scaleX(0.9434);transform-origin:0 0;">p CC</div>
<div style="left:1158px;top:424px;width:22px;height:150px;background:#3a3a3a;"></div>
<div style="left:1158px;top:430px;width:22px;height:129px;background:#646464;"></div>
<div style="left:1158px;top:559px;width:22px;height:8px;background:#a3adab;"></div>
<div style="left:1199px;top:453px;width:63px;height:27px;background:#545454;"></div>
<svg style="left:1203.5px;top:460.0px" width="8" height="13"><path d="M0.3 0 L7.3 6.5 L0.3 13Z" fill="#767676"/></svg>
<div class="t" style="left:1213.50px;top:466.66px;font:15.69px 'Liberation Sans',sans-serif;line-height:0;color:#ececec;transform:scaleX(0.9434);transform-origin:0 0;">0.</div>
<div style="left:1273px;top:453px;width:29px;height:29px;background:#333;"></div>
<svg style="left:1273px;top:453px" width="29" height="29"><path d="M7.83 7.83 L21.17 21.17 M21.17 7.83 L7.83 21.17" stroke="#5c5c5c" stroke-width="2.2" stroke-linecap="round"/></svg>
<div style="left:1187px;top:482px;width:116px;height:74px;background:#000;border:1px solid #23557f;box-sizing:border-box"></div>
<svg style="left:1207px;top:554px" width="15" height="16"><rect width="15" height="16" fill="#8e1b1b"/><circle cx="7.5" cy="8.0" r="5.1000000000000005" fill="none" stroke="#9c5050" stroke-width="1.1"/></svg>
<div style="left:1224px;top:550px;width:47px;height:26px;background:#353535;border-top:5px solid #b96ce2;border-bottom:5px solid #b96ce2;box-sizing:border-box"></div>
<div class="t" style="left:1229.50px;top:563.26px;font:15.69px 'Liberation Sans',sans-serif;line-height:0;color:#e4e4e4;transform:scaleX(0.9434);transform-origin:0 0;">p CC</div>
<div class="t" style="left:1042.00px;top:602.50px;font:bold 14.42px 'Liberation Sans',sans-serif;line-height:0;color:#57a7eb;transform:scaleX(1.0109);transform-origin:0 0;">Movie</div>
<div style="left:1040px;top:612px;width:41px;height:40px;background:#333;"></div>
<svg style="left:1040px;top:612px" width="41" height="40"><path d="M10.66 10.4 L30.34 29.6 M30.34 10.4 L10.66 29.6" stroke="#5c5c5c" stroke-width="2.4" stroke-linecap="round"/></svg>
<div style="left:1094px;top:622px;width:125px;height:30px;background:linear-gradient(#474747,#363636);"></div>
<div class="t" style="left:1111.40px;top:639.36px;font:15.69px 'Liberation Sans',sans-serif;line-height:0;color:#e6e6e6;transform:scaleX(0.9434);transform-origin:0 0;">1280 720</div>
<svg style="left:1199px;top:634.0px" width="12" height="7"><path d="M0.5 0.5 L11.5 0.5 L6 6.5Z" fill="#eee"/></svg>
<div style="left:1094px;top:602px;width:40px;height:23px;background:linear-gradient(#4c4c4c,#393939);border-radius:6px"></div>
<div class="t" style="left:1099.20px;top:613.17px;font:bold 12.19px 'Liberation Sans',sans-serif;line-height:0;color:#ececec;transform:scaleX(0.9476);transform-origin:0 0;">read</div>
<div style="left:1137px;top:602px;width:39px;height:23px;background:linear-gradient(#4c4c4c,#393939);border-radius:6px"></div>
<div class="t" style="left:1140.90px;top:613.17px;font:bold 12.19px 'Liberation Sans',sans-serif;line-height:0;color:#ececec;transform:scaleX(0.9424);transform-origin:0 0;">start</div>
<div style="left:1179px;top:602px;width:40px;height:23px;background:linear-gradient(#4c4c4c,#393939);border-radius:6px"></div>
<div class="t" style="left:1183.60px;top:613.17px;font:bold 12.19px 'Liberation Sans',sans-serif;line-height:0;color:#ececec;transform:scaleX(0.8899);transform-origin:0 0;">stop</div>
<div class="t r" style="left:1224.00px;top:638.26px;font:15.69px 'Liberation Sans',sans-serif;line-height:0;color:#57a7eb;transform:scaleX(0.9492);transform-origin:0 0;">Movie dims</div>
<div class="t" style="left:1042.00px;top:667.40px;font:bold 14.42px 'Liberation Sans',sans-serif;line-height:0;color:#57a7eb;transform:scaleX(1.0274);transform-origin:0 0;">Compositor</div>
<div style="left:1133px;top:656.5px;width:66px;height:22px;background:linear-gradient(#555,#444);"></div>
<div class="t" style="left:1138.30px;top:667.30px;font:bold 14.42px 'Liberation Sans',sans-serif;line-height:0;color:#57a7eb;transform:scaleX(1.0288);transform-origin:0 0;">GL-Mov</div>
<div class="t r" style="left:1207.90px;top:667.56px;font:15.69px 'Liberation Sans',sans-serif;line-height:0;color:#57a7eb;transform:scaleX(0.9529);transform-origin:0 0;">Input swap</div>
<div style="left:1036px;top:683px;width:93px;height:27px;background:linear-gradient(#474747,#363636);"></div>
<div class="t" style="left:1043.70px;top:697.06px;font:15.69px 'Liberation Sans',sans-serif;line-height:0;color:#e6e6e6;transform:scaleX(0.9434);transform-origin:0 0;">normal</div>
<svg style="left:1109px;top:693.5px" width="12" height="7"><path d="M0.5 0.5 L11.5 0.5 L6 6.5Z" fill="#eee"/></svg>
<div class="t r" style="left:1136.50px;top:694.86px;font:15.69px 'Liberation Sans',sans-serif;line-height:0;color:#57a7eb;transform:scaleX(0.9467);transform-origin:0 0;">Comp-style</div>
<div style="left:1036px;top:713px;width:116px;height:23px;background:#3a3a3a;"></div>
<div style="left:1042px;top:713px;width:104px;height:23px;background:#646464;"></div>
<div style="left:1042.5px;top:713px;width:7.5px;height:23px;background:#a3adab;"></div>
<div style="left:1158px;top:711px;width:46px;height:29px;background:#333333;"></div>
<svg style="left:1162.5px;top:719.0px" width="8" height="13"><path d="M0.3 0 L7.3 6.5 L0.3 13Z" fill="#767676"/></svg>
<div class="t" style="left:1172.50px;top:725.66px;font:15.69px 'Liberation Sans',sans-serif;line-height:0;color:#ececec;transform:scaleX(0.9434);transform-origin:0 0;">0</div>
<div class="t r" style="left:1210.10px;top:723.06px;font:15.69px 'Liberation Sans',sans-serif;line-height:0;color:#57a7eb;transform:scaleX(0.9510);transform-origin:0 0;">Fade length</div>
<div class="t r" style="left:1221.80px;top:740.56px;font:15.69px 'Liberation Sans',sans-serif;line-height:0;color:#57a7eb;transform:scaleX(0.9624);transform-origin:0 0;">(frames)</div>
<div class="t r" style="left:1045.20px;top:749.26px;font:15.69px 'Liberation Sans',sans-serif;line-height:0;color:#57a7eb;transform:scaleX(0.9464);transform-origin:0 0;">Xfade</div>
<div style="left:1099px;top:737px;width:47px;height:27px;background:#353535;border-top:5px solid #b96ce2;border-bottom:5px solid #b96ce2;box-sizing:border-box"></div>
<div class="t" style="left:1104.50px;top:750.76px;font:15.69px 'Liberation Sans',sans-serif;line-height:0;color:#e4e4e4;transform:scaleX(0.9434);transform-origin:0 0;">p CC</div>
<svg style="left:1150px;top:744px" width="17" height="16"><rect width="17" height="16" fill="#8e1b1b"/><circle cx="8.5" cy="8.0" r="5.44" fill="none" stroke="#9c5050" stroke-width="1.1"/></svg>
<div style="left:1084px;top:806px;width:187px;height:28px;background:#353535;"></div>
<svg style="left:1088px;top:811.0px" width="10" height="18"><path d="M1 7 L5 2 L9 7Z M1 11 L5 16 L9 11Z" fill="#6a6a6a"/></svg>
<div class="t" style="left:1102.70px;top:820.66px;font:15.69px 'Liberation Sans',sans-serif;line-height:0;color:#e6e6e6;transform:scaleX(0.9434);transform-origin:0 0;">fullscreen</div>
<div style="left:1208px;top:806px;width:2px;height:28px;background:#a8a8a8;"></div>
<svg style="left:1213px;top:811.0px" width="18" height="18"><rect x="1.2" y="1.2" width="15.6" height="15.6" fill="none" stroke="#aaa" stroke-width="2"/></svg></body></html>
